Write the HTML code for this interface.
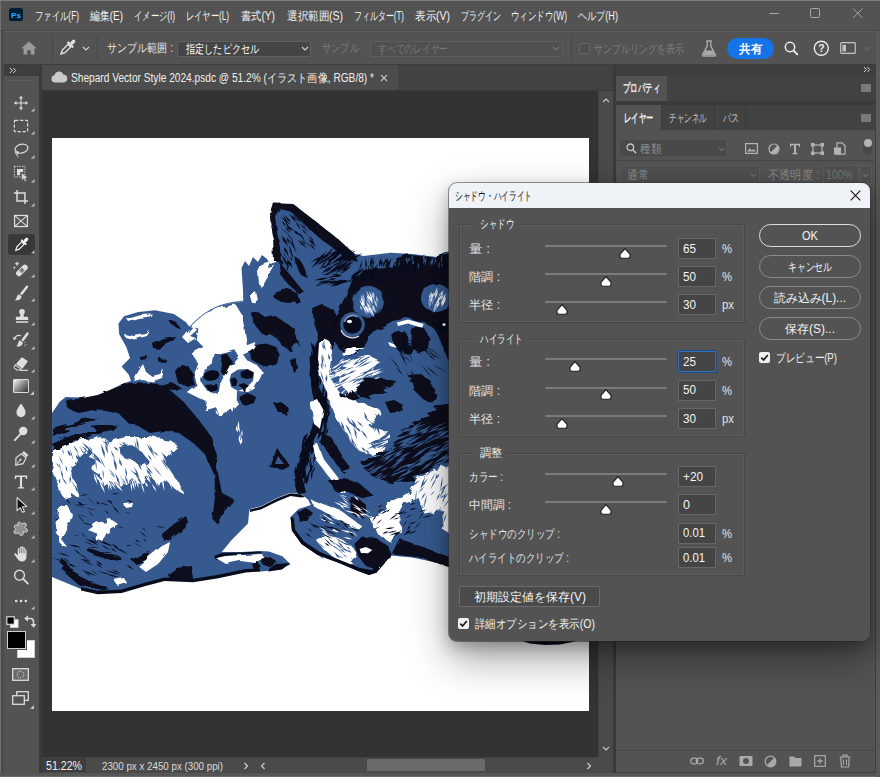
<!DOCTYPE html>
<html lang="ja">
<head>
<meta charset="utf-8">
<title>Photoshop</title>
<style>
*{box-sizing:border-box;margin:0;padding:0}
html,body{width:880px;height:777px;overflow:hidden;background:#535353}
body{position:relative;font-family:"Liberation Sans",sans-serif;font-size:12px;color:#e6e6e6;line-height:1}
.abs{position:absolute}
svg{display:block;overflow:visible}
.tx{position:absolute;overflow:visible}
.tx text{font-family:"Liberation Sans",sans-serif;white-space:pre}
</style>
</head>
<body>

<div class="abs" style="left:0px;top:0px;width:880px;height:777px;background:#535353;"></div>
<div class="abs" style="left:0px;top:30px;width:880px;height:1px;background:#474747;"></div>
<svg class="abs" style="left:9px;top:8px;" width="14" height="13" viewBox="0 0 14 13"><rect width="14" height="13" rx="2.6" fill="#001e36"/><text x="2.1" y="9.9" font-family="Liberation Sans" font-weight="bold" font-size="8" fill="#31a8ff" textLength="10" lengthAdjust="spacingAndGlyphs">Ps</text></svg>
<svg class="tx" style="left:35px;top:7.0px" width="46" height="18"><text x="0" y="13.3" font-size="12" font-weight="normal" fill="#f2f2f2" textLength="44" lengthAdjust="spacingAndGlyphs">ファイル(F)</text></svg>
<svg class="tx" style="left:90px;top:7.0px" width="35" height="18"><text x="0" y="13.3" font-size="12" font-weight="normal" fill="#f2f2f2" textLength="33" lengthAdjust="spacingAndGlyphs">編集(E)</text></svg>
<svg class="tx" style="left:134px;top:7.0px" width="43" height="18"><text x="0" y="13.3" font-size="12" font-weight="normal" fill="#f2f2f2" textLength="41" lengthAdjust="spacingAndGlyphs">イメージ(I)</text></svg>
<svg class="tx" style="left:186px;top:7.0px" width="45" height="18"><text x="0" y="13.3" font-size="12" font-weight="normal" fill="#f2f2f2" textLength="43" lengthAdjust="spacingAndGlyphs">レイヤー(L)</text></svg>
<svg class="tx" style="left:241px;top:7.0px" width="36" height="18"><text x="0" y="13.3" font-size="12" font-weight="normal" fill="#f2f2f2" textLength="34" lengthAdjust="spacingAndGlyphs">書式(Y)</text></svg>
<svg class="tx" style="left:287px;top:7.0px" width="58" height="18"><text x="0" y="13.3" font-size="12" font-weight="normal" fill="#f2f2f2" textLength="56" lengthAdjust="spacingAndGlyphs">選択範囲(S)</text></svg>
<svg class="tx" style="left:354px;top:7.0px" width="52" height="18"><text x="0" y="13.3" font-size="12" font-weight="normal" fill="#f2f2f2" textLength="50" lengthAdjust="spacingAndGlyphs">フィルター(T)</text></svg>
<svg class="tx" style="left:415px;top:7.0px" width="37" height="18"><text x="0" y="13.3" font-size="12" font-weight="normal" fill="#f2f2f2" textLength="35" lengthAdjust="spacingAndGlyphs">表示(V)</text></svg>
<svg class="tx" style="left:461px;top:7.0px" width="42" height="18"><text x="0" y="13.3" font-size="12" font-weight="normal" fill="#f2f2f2" textLength="40" lengthAdjust="spacingAndGlyphs">プラグイン</text></svg>
<svg class="tx" style="left:511px;top:7.0px" width="58" height="18"><text x="0" y="13.3" font-size="12" font-weight="normal" fill="#f2f2f2" textLength="56" lengthAdjust="spacingAndGlyphs">ウィンドウ(W)</text></svg>
<svg class="tx" style="left:578px;top:7.0px" width="42" height="18"><text x="0" y="13.3" font-size="12" font-weight="normal" fill="#f2f2f2" textLength="40" lengthAdjust="spacingAndGlyphs">ヘルプ(H)</text></svg>
<svg class="abs" style="left:769px;top:7px;" width="100" height="12" viewBox="0 0 100 12"><path d="M0.5 6.5H10" stroke="#a8a8a8" stroke-width="1" fill="none"/><rect x="41.5" y="1.5" width="9" height="9" rx="1" stroke="#a8a8a8" fill="none"/><path d="M84 1.5l9.5 9.5M93.5 1.5L84 11" stroke="#a8a8a8" stroke-width="1" fill="none"/></svg>
<div class="abs" style="left:4px;top:31px;width:872px;height:33px;background:#535353;border-top:1px solid #5e5e5e"></div>
<div class="abs" style="left:4px;top:64px;width:872px;height:1px;background:#3c3c3c;"></div>
<svg class="abs" style="left:21px;top:41px;" width="16" height="14" viewBox="0 0 16 14"><path d="M8 0.5L0.3 7.2H2.5V13.5H6.3V9.2H9.7V13.5H13.5V7.2H15.7Z" fill="#9a9a9a"/></svg>
<div class="abs" style="left:52px;top:36px;width:1px;height:24px;background:#474747;"></div>
<div class="abs" style="left:97px;top:36px;width:1px;height:24px;background:#474747;"></div>
<svg class="abs" style="left:59px;top:39px;" width="17" height="17" viewBox="0 0 17 17"><g transform="translate(8.5 8.5) scale(1.15) translate(-8.5 -8.5) rotate(45 8.5 8.5)"><rect x="7" y="-0.5" width="3" height="5" rx="1.4" fill="#e0e0e0"/><rect x="5" y="4" width="7" height="2" rx=".6" fill="#e0e0e0"/><path d="M6.9 6.2v7l1.6 3.3 1.6-3.3v-7z" fill="none" stroke="#e0e0e0" stroke-width="1.2"/></g></svg>
<svg class="abs" style="left:82px;top:46px;" width="8" height="5" viewBox="0 0 8 5"><path d="M1 1l3 3 3-3" stroke="#d0d0d0" stroke-width="1.2" fill="none"/></svg>
<svg class="tx" style="left:107px;top:39.0px" width="68" height="18"><text x="0" y="13.3" font-size="12" font-weight="normal" fill="#e6e6e6" textLength="66" lengthAdjust="spacingAndGlyphs">サンプル範囲 :</text></svg>
<div class="abs" style="left:177px;top:41px;width:134px;height:16px;background:#454545;border-radius:2px;border:1px solid #606060"></div>
<svg class="tx" style="left:186px;top:39.5px" width="75" height="18"><text x="0" y="13.3" font-size="12" font-weight="normal" fill="#ffffff" textLength="73" lengthAdjust="spacingAndGlyphs">指定したピクセル</text></svg>
<svg class="abs" style="left:301px;top:46px;" width="8" height="5" viewBox="0 0 8 5"><path d="M1 1l3 3 3-3" stroke="#d0d0d0" stroke-width="1.2" fill="none"/></svg>
<svg class="tx" style="left:322px;top:39.0px" width="44" height="18"><text x="0" y="13.3" font-size="12" font-weight="normal" fill="#7d7d7d" textLength="42" lengthAdjust="spacingAndGlyphs">サンプル :</text></svg>
<div class="abs" style="left:370px;top:41px;width:193px;height:16px;background:#505050;border-radius:2px;border:1px solid #5e5e5e"></div>
<svg class="tx" style="left:378px;top:39.5px" width="72" height="18"><text x="0" y="13.3" font-size="12" font-weight="normal" fill="#787878" textLength="70" lengthAdjust="spacingAndGlyphs">すべてのレイヤー</text></svg>
<svg class="abs" style="left:552px;top:46px;" width="8" height="5" viewBox="0 0 8 5"><path d="M1 1l3 3 3-3" stroke="#757575" stroke-width="1.2" fill="none"/></svg>
<div class="abs" style="left:571px;top:36px;width:1px;height:24px;background:#474747;"></div>
<div class="abs" style="left:579px;top:43px;width:11px;height:11px;background:#4e4e4e;border:1px solid #666;border-radius:2px"></div>
<svg class="tx" style="left:594px;top:39.5px" width="92" height="18"><text x="0" y="13.3" font-size="12" font-weight="normal" fill="#7d7d7d" textLength="90" lengthAdjust="spacingAndGlyphs">サンプルリングを表示</text></svg>
<svg class="abs" style="left:701px;top:40px;" width="16" height="17" viewBox="0 0 16 17"><path d="M5.2 1h5.6M6.2 1v5.2L1.6 14.6a1 1 0 0 0 .9 1.5h11a1 1 0 0 0 .9-1.5L9.8 6.2V1" fill="none" stroke="#a9a9a9" stroke-width="1.4"/><path d="M4.5 10.5h7l2.6 5H1.9z" fill="#a9a9a9"/></svg>
<div class="abs" style="left:727px;top:38px;width:47px;height:21px;background:#1473e6;border-radius:10.5px"></div>
<svg class="tx" style="left:739px;top:39.5px" width="25" height="18"><text x="0" y="13.3" font-size="12" font-weight="bold" fill="#ffffff" textLength="23" lengthAdjust="spacingAndGlyphs">共有</text></svg>
<svg class="abs" style="left:784px;top:41px;" width="15" height="15" viewBox="0 0 15 15"><circle cx="6" cy="6" r="4.7" fill="none" stroke="#ececec" stroke-width="1.5"/><path d="M9.5 9.5l4.3 4.3" stroke="#ececec" stroke-width="1.8"/></svg>
<svg class="abs" style="left:813px;top:40px;" width="17" height="17" viewBox="0 0 17 17"><circle cx="8.3" cy="8.3" r="7" fill="none" stroke="#ececec" stroke-width="1.4"/><text x="5.3" y="12.2" font-family="Liberation Sans" font-weight="bold" font-size="10.5" fill="#ececec">?</text></svg>
<svg class="abs" style="left:840px;top:42px;" width="16" height="12" viewBox="0 0 16 12"><rect x=".7" y=".7" width="14.6" height="10.6" rx="1" fill="none" stroke="#c4c4c4" stroke-width="1.2"/><rect x="2.5" y="2.8" width="3.5" height="6.6" fill="#c4c4c4"/></svg>
<svg class="abs" style="left:863px;top:46px;" width="8" height="5" viewBox="0 0 8 5"><path d="M1 1l3 3 3-3" stroke="#666" stroke-width="1.2" fill="none"/></svg>
<div class="abs" style="left:1px;top:31px;width:3px;height:746px;background:#4b4b4b;"></div>
<div class="abs" style="left:0px;top:0px;width:1px;height:777px;background:#6f6f6f;"></div>
<div class="abs" style="left:0px;top:0px;width:880px;height:1px;background:#7c7c7c;"></div>
<div class="abs" style="left:4px;top:65px;width:35px;height:707px;background:#535353;"></div>
<div class="abs" style="left:4px;top:65px;width:35px;height:11px;background:#3e3e3e;"></div>
<div class="abs" style="left:39px;top:65px;width:3px;height:712px;background:#3a3a3a;"></div>
<svg class="abs" style="left:9px;top:67px;" width="8" height="7" viewBox="0 0 8 7"><path d="M1 1l2.3 2.5L1 6M4.4 1l2.3 2.5L4.4 6" stroke="#d8d8d8" stroke-width="1" fill="none"/></svg>
<div class="abs" style="left:9px;top:80px;width:25px;height:1px;background:#5e5e5e;"></div>
<div class="abs" style="left:8px;top:234px;width:27px;height:21px;background:#383838;border-radius:3px"></div>
<svg class="abs" style="left:10.5px;top:92.5px;" width="20" height="20" viewBox="0 0 20 20"><g transform="translate(10 10) scale(.88) translate(-10 -10)"><g transform="translate(10 10) scale(.9) translate(-10 -10)"><path d="M10 3.5v13M3.500 10h13" stroke="#dedede" stroke-width="1.3"/><path d="M10 1l2.600 3.300h-5.200zM10 19l2.600-3.300h-5.200zM1 10l3.300-2.600v5.200zM19 10l-3.300-2.600v5.200z" fill="#dedede"/></g></g></svg>
<svg class="abs" style="left:30.5px;top:108.0px;" width="3.5" height="3.5" viewBox="0 0 3.5 3.5"><path d="M3.500 0V3.500H0Z" fill="#bdbdbd"/></svg>
<svg class="abs" style="left:11px;top:115.5px;" width="20" height="20" viewBox="0 0 20 20"><g transform="translate(10 10) scale(.88) translate(-10 -10)"><rect x="2.500" y="3.500" width="15" height="13" rx="1" fill="none" stroke="#dedede" stroke-width="1.400" stroke-dasharray="3.600 2"/></g></svg>
<svg class="abs" style="left:30.5px;top:131.0px;" width="3.5" height="3.5" viewBox="0 0 3.5 3.5"><path d="M3.500 0V3.500H0Z" fill="#bdbdbd"/></svg>
<svg class="abs" style="left:11px;top:139.5px;" width="20" height="20" viewBox="0 0 20 20"><g transform="translate(10 10) scale(.88) translate(-10 -10)"><ellipse cx="10.500" cy="8.500" rx="7.500" ry="5" transform="rotate(-14 10.500 8.500)" fill="none" stroke="#dedede" stroke-width="1.400"/><circle cx="5.300" cy="13" r="1.700" fill="none" stroke="#dedede" stroke-width="1.100"/><path d="M5.300 14.500c0 2 .800 3 1.800 3.800" fill="none" stroke="#dedede" stroke-width="1.100"/></g></svg>
<svg class="abs" style="left:30.5px;top:155.0px;" width="3.5" height="3.5" viewBox="0 0 3.5 3.5"><path d="M3.500 0V3.500H0Z" fill="#bdbdbd"/></svg>
<svg class="abs" style="left:11px;top:163px;" width="20" height="20" viewBox="0 0 20 20"><g transform="translate(10 10) scale(.88) translate(-10 -10)"><rect x="2.500" y="2.500" width="12" height="12" fill="none" stroke="#dedede" stroke-width="1.100" stroke-dasharray="1.600 1.300"/><path d="M5.500 5.500h7v3.500h-3.500v3.500h-3.500z" fill="#dedede"/><path d="M10.800 9.600v9l2.300-2.100 1.500 3.200 1.700-.8-1.500-3.100 3-.3z" fill="#dedede" stroke="#535353" stroke-width=".6"/></g></svg>
<svg class="abs" style="left:30.5px;top:178.5px;" width="3.5" height="3.5" viewBox="0 0 3.5 3.5"><path d="M3.500 0V3.500H0Z" fill="#bdbdbd"/></svg>
<svg class="abs" style="left:10.5px;top:187px;" width="20" height="20" viewBox="0 0 20 20"><g transform="translate(10 10) scale(.88) translate(-10 -10)"><path d="M5.500 2v12.500h12.500M2 5.500h12.500v12.500" fill="none" stroke="#dedede" stroke-width="1.700"/></g></svg>
<svg class="abs" style="left:30.5px;top:202.5px;" width="3.5" height="3.5" viewBox="0 0 3.5 3.5"><path d="M3.500 0V3.500H0Z" fill="#bdbdbd"/></svg>
<svg class="abs" style="left:11px;top:210.5px;" width="20" height="20" viewBox="0 0 20 20"><g transform="translate(10 10) scale(.88) translate(-10 -10)"><rect x="2.700" y="3.700" width="14.600" height="12.600" fill="none" stroke="#dedede" stroke-width="1.400"/><path d="M2.700 3.700l14.600 12.600M17.300 3.700L2.700 16.300" stroke="#dedede" stroke-width="1.200"/></g></svg>
<svg class="abs" style="left:11px;top:234.5px;" width="20" height="20" viewBox="0 0 20 20"><g transform="translate(10 10) scale(.88) translate(-10 -10)"><g transform="rotate(45 10 10)"><rect x="8.200" y="-1" width="3.600" height="6" rx="1.700" fill="#f4f4f4"/><rect x="6" y="4.500" width="8" height="2.200" rx=".6" fill="#f4f4f4"/><path d="M8.100 7v7.800l1.900 3.700 1.900-3.700V7z" fill="none" stroke="#f4f4f4" stroke-width="1.300"/></g></g></svg>
<svg class="abs" style="left:30.5px;top:250.0px;" width="3.5" height="3.5" viewBox="0 0 3.5 3.5"><path d="M3.500 0V3.500H0Z" fill="#bdbdbd"/></svg>
<svg class="abs" style="left:11px;top:258.5px;" width="20" height="20" viewBox="0 0 20 20"><g transform="translate(10 10) scale(.88) translate(-10 -10)"><g transform="rotate(-45 11 11.500)"><rect x="3" y="8.300" width="16" height="6.600" rx="3.300" fill="#dedede"/><rect x="8.800" y="9.400" width="4.400" height="4.400" fill="#535353"/><circle cx="10" cy="10.700" r=".6" fill="#dedede"/><circle cx="12" cy="10.700" r=".6" fill="#dedede"/><circle cx="10" cy="12.600" r=".6" fill="#dedede"/><circle cx="12" cy="12.600" r=".6" fill="#dedede"/></g><path d="M5.500 1l.9 2.100 2.100.9-2.100.9-.9 2.100-.9-2.100-2.100-.9 2.100-.9z" fill="#dedede"/><path d="M2.500 7l.5 1.100 1.100.5-1.100.5-.5 1.100-.5-1.100L.9 8.600 2 8.100z" fill="#dedede"/></g></svg>
<svg class="abs" style="left:30.5px;top:274.0px;" width="3.5" height="3.5" viewBox="0 0 3.5 3.5"><path d="M3.500 0V3.500H0Z" fill="#bdbdbd"/></svg>
<svg class="abs" style="left:11px;top:282.5px;" width="20" height="20" viewBox="0 0 20 20"><g transform="translate(10 10) scale(.88) translate(-10 -10)"><path d="M17.800 1.600c.9.600.4 1.800-.3 2.800l-6.400 8.200-2.300-1.700 6.400-8.200c.8-1 1.800-1.700 2.600-1.100z" fill="#dedede"/><path d="M8 11.700l2.300 1.800c.6 1.600-.4 3.300-2.200 4.200-1.800.8-3.900.8-5.300.2 1.300-.5 1.900-1.400 2.200-2.700.4-1.800 1.300-3.300 3-3.500z" fill="#dedede"/></g></svg>
<svg class="abs" style="left:30.5px;top:298.0px;" width="3.5" height="3.5" viewBox="0 0 3.5 3.5"><path d="M3.500 0V3.500H0Z" fill="#bdbdbd"/></svg>
<svg class="abs" style="left:11.5px;top:306px;" width="20" height="20" viewBox="0 0 20 20"><g transform="translate(10 10) scale(.88) translate(-10 -10)"><path d="M10 2a3.200 3.200 0 0 1 3.200 3.200c0 1.500-1 2.300-1.300 3.400-.2.800-.1 1.700.5 2.200h3.100c1 0 1.500.6 1.500 1.500v2.200H3v-2.200c0-.9.500-1.500 1.500-1.500h3.100c.6-.5.700-1.400.5-2.200-.3-1.100-1.300-1.900-1.300-3.400A3.200 3.200 0 0 1 10 2z" fill="#dedede"/><rect x="3" y="16" width="14" height="1.700" fill="#dedede"/></g></svg>
<svg class="abs" style="left:30.5px;top:321.5px;" width="3.5" height="3.5" viewBox="0 0 3.5 3.5"><path d="M3.500 0V3.500H0Z" fill="#bdbdbd"/></svg>
<svg class="abs" style="left:11px;top:330px;" width="20" height="20" viewBox="0 0 20 20"><g transform="translate(10 10) scale(.88) translate(-10 -10)"><path d="M18.300 1.400c.9.600.4 1.800-.3 2.800l-5.400 7.400-2.300-1.700 5.400-7.400c.8-1 1.800-1.700 2.600-1.100z" fill="#dedede"/><path d="M9.500 10.700l2.300 1.800c.6 1.600-.4 3.300-2.200 4.200-1.800.8-3.900.8-5.300.2 1.300-.5 1.900-1.400 2.200-2.700.4-1.800 1.300-3.300 3-3.500z" fill="#dedede"/><path d="M2.300 8.700c1.300-3 4.500-4.500 7.700-3.600" fill="none" stroke="#dedede" stroke-width="1.200"/><path d="M.6 6.700l1.300 3.600 3.200-1.900z" fill="#dedede"/><path d="M14.500 12.500v.1M16 15v.1M14 16.500v.1" stroke="#dedede" stroke-width="1.100" stroke-linecap="round"/></g></svg>
<svg class="abs" style="left:30.5px;top:345.5px;" width="3.5" height="3.5" viewBox="0 0 3.5 3.5"><path d="M3.500 0V3.500H0Z" fill="#bdbdbd"/></svg>
<svg class="abs" style="left:11px;top:353.5px;" width="20" height="20" viewBox="0 0 20 20"><g transform="translate(10 10) scale(.88) translate(-10 -10)"><path d="M12.200 2.800l5 3.600c.5.400.5.900.2 1.400l-5.800 7.600-7.300-5.300 5.800-7c.6-.7 1.400-.8 2.100-.3z" fill="#dedede"/><path d="M3.500 11l6.800 5-0.600.8H5.400l-2.800-2.200c-.6-.5-.7-1.100-.2-1.800z" fill="none" stroke="#dedede" stroke-width="1.200"/><path d="M9 17.200h9" stroke="#dedede" stroke-width="1.300"/></g></svg>
<svg class="abs" style="left:30.5px;top:369.0px;" width="3.5" height="3.5" viewBox="0 0 3.5 3.5"><path d="M3.500 0V3.500H0Z" fill="#bdbdbd"/></svg>
<div class="abs" style="left:13px;top:379px;width:16px;height:14px;border:1.500px solid #dcdcdc;border-radius:1px;background:linear-gradient(135deg,#e8e8e8 5%,#8a8a8a 50%,#3c3c3c 95%)"></div>
<svg class="abs" style="left:30px;top:391px;" width="4" height="4" viewBox="0 0 4 4"><path d="M4 0V4H0Z" fill="#c8c8c8"/></svg>
<svg class="abs" style="left:11px;top:400.5px;" width="20" height="20" viewBox="0 0 20 20"><g transform="translate(10 10) scale(.88) translate(-10 -10)"><path d="M10 1.500c2.400 3.600 5.200 6.700 5.200 10.300a5.200 5.200 0 0 1-10.400 0C4.800 8.200 7.600 5.100 10 1.500z" fill="#dedede"/></g></svg>
<svg class="abs" style="left:30.5px;top:416.0px;" width="3.5" height="3.5" viewBox="0 0 3.5 3.5"><path d="M3.500 0V3.500H0Z" fill="#bdbdbd"/></svg>
<svg class="abs" style="left:11px;top:424px;" width="20" height="20" viewBox="0 0 20 20"><g transform="translate(10 10) scale(.88) translate(-10 -10)"><circle cx="12.500" cy="6.500" r="4.800" fill="#dedede"/><path d="M9 10.500L3 17" stroke="#dedede" stroke-width="2.200" stroke-linecap="round"/></g></svg>
<svg class="abs" style="left:30.5px;top:439.5px;" width="3.5" height="3.5" viewBox="0 0 3.5 3.5"><path d="M3.500 0V3.500H0Z" fill="#bdbdbd"/></svg>
<svg class="abs" style="left:11px;top:448.5px;" width="20" height="20" viewBox="0 0 20 20"><g transform="translate(10 10) scale(.88) translate(-10 -10)"><g transform="rotate(40 10 10)"><path d="M6.500 1h7v3h-7z" fill="#dedede"/><path d="M6.500 5.200h7l1.800 7.300L10 19.300 4.700 12.500z" fill="none" stroke="#dedede" stroke-width="1.300"/><path d="M10 18.500v-7" stroke="#dedede" stroke-width="1.100"/><circle cx="10" cy="10.800" r="1.200" fill="#dedede"/></g></g></svg>
<svg class="abs" style="left:30.5px;top:464.0px;" width="3.5" height="3.5" viewBox="0 0 3.5 3.5"><path d="M3.500 0V3.500H0Z" fill="#bdbdbd"/></svg>
<svg class="abs" style="left:11px;top:471.5px;" width="20" height="20" viewBox="0 0 20 20"><g transform="translate(10 10) scale(.88) translate(-10 -10)"><path d="M3 2.500h14v4.200h-1.300l-.5-2.300H11.200v11.300l2.300.5v1.300H6.500v-1.300l2.300-.5V4.400H4.800l-.5 2.300H3z" fill="#dedede"/></g></svg>
<svg class="abs" style="left:30.5px;top:487.0px;" width="3.5" height="3.5" viewBox="0 0 3.5 3.5"><path d="M3.500 0V3.500H0Z" fill="#bdbdbd"/></svg>
<svg class="abs" style="left:11px;top:495px;" width="20" height="20" viewBox="0 0 20 20"><g transform="translate(10 10) scale(.88) translate(-10 -10)"><path d="M5.500 1.500v15l3.700-3.400 2.500 5.200 2.200-1-2.400-5.200 5-.4z" fill="#101010" stroke="#dedede" stroke-width="1.200" stroke-linejoin="round"/></g></svg>
<svg class="abs" style="left:30.5px;top:510.5px;" width="3.5" height="3.5" viewBox="0 0 3.5 3.5"><path d="M3.500 0V3.500H0Z" fill="#bdbdbd"/></svg>
<svg class="abs" style="left:11px;top:519px;" width="20" height="20" viewBox="0 0 20 20"><g transform="translate(10 10) scale(.88) translate(-10 -10)"><path d="M7 2.500c1.600-.9 2.800.6 3.400 1.900 1.600-1 4-1.700 5.300-.3 1.300 1.500-.3 3.200-1.600 4.100 1.600.9 3.900 2.200 3.200 4.100-.8 1.900-3.300 1.200-4.800.6.200 1.800.1 4.200-1.900 4.500-2 .3-2.800-1.800-3.300-3.300-1.400 1-3.700 2-4.900.4-1.100-1.600.7-3.300 2.100-4.200C3.200 9.300 1.700 7.700 2.700 6.200c1-1.400 2.900-.7 4.100 0C6.500 5 5.800 3.200 7 2.500z" fill="#8f8f8f" stroke="#dedede" stroke-width="1.100"/></g></svg>
<svg class="abs" style="left:30.5px;top:534.5px;" width="3.5" height="3.5" viewBox="0 0 3.5 3.5"><path d="M3.500 0V3.500H0Z" fill="#bdbdbd"/></svg>
<svg class="abs" style="left:11px;top:543.5px;" width="20" height="20" viewBox="0 0 20 20"><g transform="translate(10 10) scale(.88) translate(-10 -10)"><path d="M8.300 9V3.200c0-1.500 2-1.500 2 0V2.300c0-1.500 2.100-1.500 2.100 0v1.200c0-1.400 2-1.400 2 0v2c0-1.300 1.900-1.300 1.900 0v7.300c0 3.500-2 5.700-5.300 5.700-2.700 0-3.800-1.200-5-3L2.600 10.800c-.8-1.300.8-2.300 1.800-1.200l1.900 2.200V4.600c0-1.500 2-1.500 2 0z" fill="#dedede"/><path d="M8.300 9V4M10.300 9V3M12.400 9V3.500M14.400 9.300V5.500" stroke="#535353" stroke-width=".7"/></g></svg>
<svg class="abs" style="left:30.5px;top:559.0px;" width="3.5" height="3.5" viewBox="0 0 3.5 3.5"><path d="M3.500 0V3.500H0Z" fill="#bdbdbd"/></svg>
<svg class="abs" style="left:10.5px;top:567px;" width="20" height="20" viewBox="0 0 20 20"><g transform="translate(10 10) scale(.88) translate(-10 -10)"><circle cx="8.300" cy="8" r="5.600" fill="none" stroke="#dedede" stroke-width="1.600"/><path d="M12.500 12.200l5.300 5.300" stroke="#dedede" stroke-width="2.100" stroke-linecap="round"/></g></svg>
<svg class="abs" style="left:11px;top:590.5px;" width="20" height="20" viewBox="0 0 20 20"><g transform="translate(10 10) scale(.88) translate(-10 -10)"><circle cx="4.500" cy="10" r="1.500" fill="#dedede"/><circle cx="10" cy="10" r="1.500" fill="#dedede"/><circle cx="15.500" cy="10" r="1.500" fill="#dedede"/></g></svg>
<svg class="abs" style="left:30.5px;top:606.0px;" width="3.5" height="3.5" viewBox="0 0 3.5 3.5"><path d="M3.500 0V3.500H0Z" fill="#bdbdbd"/></svg>
<svg class="abs" style="left:6px;top:616px;" width="13" height="12" viewBox="0 0 13 12"><rect x="4.500" y="3.800" width="7.500" height="7.500" fill="#fff" stroke="#dcdcdc" stroke-width="1"/><rect x=".8" y=".8" width="7.500" height="7.500" fill="#000" stroke="#dcdcdc" stroke-width="1.200"/></svg>
<svg class="abs" style="left:24px;top:615px;" width="12" height="13" viewBox="0 0 12 13"><path d="M3.500 3.500h2.800a3.200 3.200 0 0 1 3.200 3.200v2.800" fill="none" stroke="#dcdcdc" stroke-width="1.500"/><path d="M.2 3.500L4 .6v5.800zM9.500 12.800L6.600 9h5.800z" fill="#dcdcdc"/></svg>
<div class="abs" style="left:17px;top:640px;width:18px;height:18px;background:#ffffff;border:1px solid #d0d0d0"></div>
<div class="abs" style="left:7px;top:631px;width:19px;height:18px;background:#000000;border:1.500px solid #cfcfcf;box-shadow:0 0 0 1px #535353"></div>
<svg class="abs" style="left:12px;top:668px;" width="17" height="13" viewBox="0 0 17 13"><rect x=".7" y=".7" width="15.600" height="11.600" fill="#6a6a6a" stroke="#dcdcdc" stroke-width="1.300"/><circle cx="8.500" cy="6.500" r="3.300" fill="none" stroke="#dcdcdc" stroke-width="1" stroke-dasharray="1.200 1"/></svg>
<svg class="abs" style="left:12px;top:691px;" width="17" height="14" viewBox="0 0 17 14"><rect x="4.700" y=".7" width="11.600" height="8.600" fill="#535353" stroke="#dcdcdc" stroke-width="1.300"/><rect x=".7" y="4.700" width="11.600" height="8.600" fill="#535353" stroke="#dcdcdc" stroke-width="1.300"/></svg>
<svg class="abs" style="left:30px;top:705px;" width="4" height="4" viewBox="0 0 4 4"><path d="M4 0V4H0Z" fill="#c8c8c8"/></svg>
<div class="abs" style="left:42px;top:65px;width:571px;height:708px;background:#333333;"></div>
<div class="abs" style="left:42px;top:65px;width:571px;height:26px;background:#424242;"></div>
<div class="abs" style="left:42px;top:65px;width:356px;height:26px;background:#4c4c4c;"></div>
<div class="abs" style="left:42px;top:90px;width:571px;height:1px;background:#3a3a3a;"></div>
<svg class="abs" style="left:51px;top:71px;" width="17" height="12" viewBox="0 0 17 12"><path d="M4 11.500a3.600 3.600 0 0 1-.5-7.150A4.600 4.600 0 0 1 12.300 3.400a4.100 4.100 0 0 1 .8 8.100z" fill="#c9c9c9"/></svg>
<svg class="tx" style="left:71px;top:68.5px" width="305" height="18"><text x="0" y="13.3" font-size="12" font-weight="normal" fill="#f0f0f0" textLength="303" lengthAdjust="spacingAndGlyphs">Shepard Vector Style 2024.psdc @ 51.2% (イラスト画像, RGB/8) *</text></svg>
<svg class="abs" style="left:380px;top:74px;" width="8" height="8" viewBox="0 0 8 8"><path d="M1 1l6 6M7 1L1 7" stroke="#c0c0c0" stroke-width="1.100"/></svg>
<div class="abs" style="left:52px;top:138px;width:537px;height:573px;background:#ffffff;"></div>
<svg class="abs" style="left:52px;top:138px;" width="537" height="573" viewBox="52 138 537 573"><defs><filter id="r1" x="-5%" y="-5%" width="110%" height="110%"><feTurbulence type="fractalNoise" baseFrequency="0.09" numOctaves="2" seed="4"/><feDisplacementMap in="SourceGraphic" scale="5"/></filter><filter id="r2" x="-10%" y="-10%" width="120%" height="120%"><feTurbulence type="fractalNoise" baseFrequency="0.14" numOctaves="2" seed="9"/><feDisplacementMap in="SourceGraphic" scale="8"/></filter><filter id="r3" x="-10%" y="-10%" width="120%" height="120%"><feTurbulence type="fractalNoise" baseFrequency="0.05 0.2" numOctaves="2" seed="2"/><feDisplacementMap in="SourceGraphic" scale="10"/></filter><clipPath id="cv"><rect x="52" y="138" width="537" height="573"/></clipPath></defs><g clip-path="url(#cv)"><path d="M52 413 L59.5 402 L65.5 397 L81 397.4 L88 400 L105 392.6 L121.6 384.3 L131 380.7 L128.8 374.7 L121.6 366.4 L130 358 L126.4 347.3 L119.2 334.2 L118.5 323.4 L124 316.3 L138.3 312 L155 310.3 L174 313.9 L186 322.2 L189.6 327 L202.7 315 L217 306.7 L233.8 302.4 L243.3 302 L243 290 L241.5 268 L245 261 L249 266 L253 257 L258 262 L262 255 L267 259 L270 264 L276 262 L277 257.6 L273 236 L270 217 L274 203.5 L293 204 L315 221 L339 240 L354 253.5 L363.5 256 L390.5 252.7 L412 254 L436.5 257 L444.6 252 L449 251.6 L470 250 L470 600 L460 568 L448.6 565.7 L439 563 L412 557.6 L390.5 555.4 L379.7 563 L377 572.4 L369 575 L358 571 L339 563 L317.6 554.9 L301.4 544 L291.9 530.5 L290.5 517 L298.6 509 L310.8 504.9 L308 499.5 L301.4 494 L290.5 492.7 L277 498 L260.8 506.2 L250 509 L249.3 510.4 L248 523.5 L231.4 540.2 L221.8 552 L241 552 L260 551 L269 551.6 L282.4 556.2 L290.5 564.3 L279.7 569.7 L260.8 571.6 L250 570.5 L245.7 571 L217 577 L193 580.8 L164.6 579.6 L145.5 584.4 L121.6 591.5 L97.7 592.7 L81 589 L52 577Z" fill="#365a8f"/><path d="M190 326.5 L201.8 316 L218.5 307 L233.6 303.6 L236 305 L242 315 L244.4 328.5 L247 345.2 L255.3 341.9 L253.6 348.6 L247 352.8 L243 354.5 L247 360.3 L257 365.3 L262.8 372 L260.3 377.9 L254 389 L248 392 L238 391 L237.7 403.8 L230.2 410.5 L220.2 417.2 L216 407.2 L205 410.5 L206.8 402 L186.7 392 L196.7 384.6 L194.2 373.7 L198.4 363.6 L191.7 353.6 L203.4 346.9 L196.7 340.2 L198.4 328.5Z" fill="#ffffff" filter="url(#r1)"/><path d="M189.500 327C196 320 206 311 218.500 306.300S240 302 248 300.500" fill="none" stroke="#365a8f" stroke-width="1"/><path d="M183 338 L193 326 L197 330 L190 336 L196 338 L188 343Z" fill="#ffffff" filter="url(#r1)"/><path d="M213.5 352.8 L223.5 353.6 L235.2 350.3 L239.4 357 L231.9 365.3 L225.2 373.7 L220.2 383.7 L218.5 393.8 L208.5 392 L200 380.4 L201.8 370.3 L211.8 363.6Z" fill="#365a8f" filter="url(#r1)"/><path d="M221 355 L227 354 L232 361 L230 368 L225 377 L221 372 L222 364Z" fill="#070b1c" filter="url(#r1)"/><ellipse cx="211.5" cy="375.5" rx="8" ry="5.2" fill="#070b1c" transform="rotate(-12 211.5 375.5)"/><path d="M205 385 L217 384 L218 390 L210 392Z" fill="#070b1c" filter="url(#r1)"/><path d="M231 374 L238 369.5 L248 369 L254 373 L253 381 L246 388 L238 391 L231 387 L229.5 380Z" fill="#365a8f"/><path d="M240.5 372 L247 369.5 L253.5 372 L252.5 378 L246 379 L241 377Z" fill="#070b1c"/><path d="M230.5 379 L235 377.5 L237.5 381 L236 386 L232 386Z" fill="#070b1c"/><path d="M238 385 L244 383 L249 386 L246 388 L245 393 L242 388Z" fill="#070b1c"/><path d="M240.5 398 L248 394 L256 397 L254 403 L246 405.5 L241 403Z" fill="#070b1c" filter="url(#r1)"/><path d="M250 351 L256 345 L266 343.5 L276 347 L279 355 L277 364 L268 367 L258 364 L251 359Z" fill="#070b1c" filter="url(#r1)"/><path d="M251 314 L258 312 L266 318 L275 316 L284 322 L296 330 L299 344 L290 350 L282 346 L277 338 L270 334 L262 334 L256 326Z" fill="#070b1c" filter="url(#r2)"/><path d="M276 292 L288 289 L298 293 L300 301 L290 304 L280 301 L274 298Z" fill="#070b1c" filter="url(#r2)"/><path d="M274 404 L281 402 L288.8 408 L286 414.7 L279 412Z" fill="#070b1c" filter="url(#r1)"/><path d="M290 360 L296 358 L298 368 L293 372Z" fill="#070b1c" filter="url(#r1)"/><path d="M258 272 L263 262 L270 260 L268 268 L275 266 L266 280 L262 288 L259 284Z" fill="#ffffff" filter="url(#r1)"/><path d="M250 296 L256 292 L258 300 L252 303Z" fill="#ffffff" filter="url(#r1)"/><path d="M126 318 L140 314 L152 313.5 L150 316.5 L138 318 L128 321Z" fill="#ffffff" filter="url(#r1)"/><path d="M124 334 L134 336 L146 334 L150 331 L147 336 L134 339.5 L125 337Z" fill="#ffffff" filter="url(#r1)"/><path d="M152 343 L163 338 L175 336 L174 340 L166 343 L160 349 L153 348Z" fill="#070b1c" filter="url(#r1)"/><path d="M140 357 L148 356 L147 360 L141 361Z" fill="#070b1c" filter="url(#r1)"/><path d="M158 357 L166 359 L165 362 L158 361Z" fill="#070b1c" filter="url(#r1)"/><path d="M168 319 L176 322 L181 329 L177 328 L170 323Z" fill="#070b1c" filter="url(#r1)"/><path d="M138 372 L143 364 L146 372 L152 376 L160 374 L164 369 L162 378 L152 381.5 L142 379 L134 381Z" fill="#ffffff" filter="url(#r1)"/><path d="M175 371 L181 364 L188 366 L193 374 L194 384 L186 386 L178 383Z" fill="#070b1c" filter="url(#r1)"/><path d="M160 385 L170 382 L182 388 L176 391 L166 390Z" fill="#070b1c" filter="url(#r1)"/><path d="M66.7 399.8 L80 398.5 L97.7 395 L115 388 L128.8 383 L150 381.9 L164.6 385.5 L183.7 402 L198 418.9 L212.3 438 L217 460 L217 468.6 L221.8 492.5 L233.8 499.7 L224 511.6 L217 523.5 L212.3 518.8 L214.7 499.7 L214.7 475.8 L205 454.3 L193 442.7 L179 433 L164.6 430.8 L150 433 L138.3 426 L128.8 423.6 L119.2 414 L97.7 409.3 L78.6 412.9 L66.7 407Z" fill="#070b1c" filter="url(#r1)"/><path d="M52 444 L70 436 L92 428 L119 424 L112 430 L92 434 L74 442 L58 452 L52 456Z" fill="#070b1c" filter="url(#r3)"/><path d="M52 428 L66 424 L84 419 L100 416 L84 424 L66 430 L52 436Z" fill="#070b1c" filter="url(#r3)"/><path d="M52 452 L62 448 L78 440 L96 437 L108 440 L100 446 L86 450 L78 460 L72 472 L76 486 L80 498 L72 494 L66 500 L60 492 L56 478 L52 470Z" fill="#ffffff" filter="url(#r2)"/><path d="M92 446 L110 441 L126 437 L150 437 L170 440 L178 446 L172 452 L164 462 L170 470 L178 482 L184 494 L176 490 L166 480 L158 484 L150 476 L140 484 L132 478 L122 488 L114 480 L104 486 L100 474 L92 470 L96 460 L88 456Z" fill="#ffffff" filter="url(#r2)"/><path d="M118 446 L130 444 L140 450 L150 462 L142 466 L132 460 L122 456Z" fill="#365a8f" filter="url(#r2)"/><path d="M101.1 444.9L101.7 448.3L103.7 451.1L103.0 447.8ZM105.0 441.6L106.0 444.6L108.1 447.1L107.1 444.0ZM109.4 472.4L111.9 475.7L115.5 477.8L113.0 474.5ZM160.3 458.8L164.4 465.3L169.2 471.4L165.1 464.8ZM153.2 451.2L155.4 454.0L158.5 456.0L156.2 453.1ZM149.0 443.8L151.0 449.5L154.3 454.7L152.2 449.0ZM121.6 442.1L124.3 445.1L127.9 447.0L125.3 443.9ZM110.5 449.9L112.2 454.8L115.0 459.2L113.3 454.3ZM145.5 465.7L148.9 470.4L153.3 474.2L150.0 469.5ZM152.5 465.3L157.1 471.5L162.5 477.0L157.9 470.9ZM107.9 468.7L111.5 472.6L115.7 475.9L112.1 472.0ZM133.6 466.1L136.3 472.8L140.0 479.0L137.4 472.3ZM137.3 461.1L138.7 466.2L141.8 470.4L140.3 465.4ZM163.2 457.9L163.7 461.3L165.7 464.0L165.2 460.7ZM148.6 448.3L151.8 453.6L155.8 458.4L152.5 453.1ZM113.7 446.6L115.6 449.4L118.7 450.9L116.7 448.1ZM78.8 446.1L82.6 452.2L87.1 457.8L83.3 451.6ZM113.6 457.2L114.0 464.1L116.2 470.8L115.8 463.8ZM93.5 452.8L97.1 459.2L102.2 464.4L98.6 458.0ZM82.3 446.1L84.6 449.5L87.9 452.0L85.6 448.6ZM124.8 449.6L128.6 453.0L133.0 455.4L129.3 452.0ZM124.7 475.0L125.9 480.4L128.5 485.3L127.4 479.9ZM136.4 437.5L136.7 444.3L138.8 450.8L138.5 444.0ZM147.8 454.8L149.2 458.1L151.8 460.6L150.4 457.2ZM88.9 445.9L90.5 448.8L92.9 451.1L91.2 448.2ZM105.2 437.2L105.9 443.1L107.5 448.9L106.9 442.9ZM93.1 453.0L94.5 456.4L97.4 458.8L95.9 455.4ZM167.6 457.7L168.9 460.9L171.1 463.6L169.7 460.4ZM103.4 448.9L103.8 452.7L105.1 456.3L104.7 452.5ZM161.0 459.4L164.8 463.5L169.2 466.9L165.4 462.8ZM121.5 474.9L122.3 481.3L124.1 487.3L123.4 481.0ZM105.1 443.4L105.8 448.9L108.2 454.0L107.5 448.4ZM101.0 443.4L102.1 451.1L104.9 458.4L103.8 450.7ZM149.3 470.8L149.9 475.0L151.9 478.6L151.3 474.5ZM102.1 440.6L105.2 443.6L109.1 445.7L105.9 442.7ZM135.2 473.9L138.4 480.8L143.3 486.6L140.1 479.7ZM162.7 453.6L165.1 457.0L168.3 459.5L165.9 456.2ZM89.2 460.0L89.8 467.1L91.7 473.9L91.1 466.8ZM130.5 470.1L134.7 474.7L140.1 477.9L135.9 473.3ZM146.2 468.7L147.5 472.5L150.2 475.3L149.0 471.6ZM102.7 469.2L102.6 474.1L103.8 478.9L103.9 474.0ZM81.6 442.1L86.4 447.7L92.4 452.0L87.6 446.4ZM84.0 468.9L84.0 475.1L85.3 481.2L85.2 475.0ZM118.6 442.8L124.4 447.9L131.1 451.7L125.3 446.6ZM118.7 473.3L121.9 479.8L126.6 485.3L123.4 478.9ZM88.4 448.9L90.5 452.6L93.8 455.2L91.7 451.6ZM90.4 453.9L95.5 459.2L101.5 463.6L96.3 458.3ZM115.0 460.4L114.9 465.5L116.7 470.3L116.7 465.2ZM118.7 460.6L119.6 463.6L121.7 466.0L120.7 463.0ZM146.5 443.4L149.3 449.3L153.3 454.4L150.5 448.5ZM99.5 456.7L102.2 463.0L105.7 468.7L103.0 462.5ZM121.6 446.9L125.5 452.4L130.4 457.0L126.6 451.5ZM125.3 467.3L125.4 472.5L127.0 477.5L126.9 472.3ZM118.8 457.6L119.9 462.7L122.4 467.3L121.2 462.2ZM115.3 472.9L116.9 480.0L120.3 486.4L118.7 479.3ZM95.0 457.4L95.5 464.4L96.9 471.3L96.5 464.3ZM78.9 457.1L81.9 460.0L85.4 462.3L82.4 459.3ZM136.3 469.7L136.1 473.5L137.6 477.0L137.8 473.2ZM134.6 440.2L135.5 447.8L137.5 455.2L136.6 447.6ZM161.3 451.3L164.5 458.4L169.2 464.6L166.0 457.5Z" fill="#365a8f"/><path d="M58.9 462.8L59.4 466.7L60.8 470.3L60.3 466.5ZM61.9 477.2L64.0 481.5L67.2 485.0L65.1 480.8ZM70.3 465.2L73.0 471.0L77.2 476.0L74.4 470.2ZM76.3 454.9L77.6 459.0L80.5 462.2L79.1 458.1ZM76.6 452.5L79.0 458.3L82.6 463.3L80.2 457.6ZM73.2 445.1L75.5 449.8L78.9 453.9L76.5 449.1ZM70.9 480.0L73.7 485.3L77.1 490.1L74.4 484.9ZM79.2 463.3L80.1 468.0L82.6 472.1L81.7 467.4ZM62.2 448.1L62.6 451.6L63.9 454.8L63.5 451.4ZM58.9 455.5L60.6 460.8L63.2 465.7L61.6 460.4ZM69.1 451.5L69.5 454.1L70.9 456.3L70.5 453.7ZM69.8 448.5L71.1 454.6L73.3 460.5L72.0 454.4ZM78.0 461.0L79.0 466.8L81.1 472.2L80.1 466.5ZM70.5 475.5L69.4 479.3L69.9 483.2L71.0 479.4ZM74.9 473.1L75.8 476.9L77.5 480.5L76.6 476.7ZM75.9 455.3L76.5 458.2L78.6 460.3L78.0 457.4ZM79.7 475.4L80.6 478.7L82.5 481.7L81.6 478.3ZM67.7 449.5L67.9 453.1L69.8 456.3L69.6 452.6ZM81.5 466.6L83.7 472.6L86.9 478.1L84.7 472.1ZM65.6 465.5L65.8 468.9L67.3 471.9L67.1 468.6ZM56.3 462.8L57.2 465.3L59.1 467.1L58.2 464.7ZM60.7 468.9L61.3 474.5L63.3 479.6L62.7 474.1ZM75.2 485.4L75.6 489.3L77.7 492.5L77.3 488.7ZM59.1 478.6L58.7 481.3L59.9 483.8L60.3 481.1Z" fill="#365a8f"/><path d="M168.3 477.2L169.7 483.9L172.2 490.4L170.8 483.6ZM135.6 475.4L136.2 482.3L138.7 488.7L138.1 481.8ZM140.6 481.5L142.0 487.7L144.6 493.5L143.2 487.3ZM121.2 470.9L121.6 476.7L123.7 482.0L123.3 476.3ZM145.1 481.8L145.5 485.0L147.7 487.3L147.3 484.1ZM154.9 476.4L156.9 482.3L159.8 487.7L157.8 481.8ZM153.5 475.3L155.6 479.1L159.1 481.8L157.0 477.9ZM107.7 480.0L107.8 485.5L109.2 490.7L109.2 485.3ZM131.5 478.8L132.3 484.8L134.7 490.3L134.0 484.3ZM109.8 480.6L112.4 485.7L115.9 490.3L113.3 485.1ZM93.4 472.8L94.6 479.1L97.5 484.7L96.3 478.5ZM113.9 477.5L115.7 482.5L118.5 486.9L116.7 482.0ZM169.4 470.4L169.9 477.9L171.4 485.2L170.9 477.7ZM130.6 481.4L130.7 486.6L132.0 491.6L132.0 486.4ZM105.6 478.8L108.1 483.8L112.4 487.5L109.8 482.5ZM98.9 479.9L101.1 486.9L105.0 493.1L102.8 486.1ZM109.5 484.8L110.4 487.8L112.2 490.4L111.3 487.4ZM132.3 478.2L133.7 481.7L136.2 484.4L134.8 480.9ZM113.9 481.9L117.7 487.5L122.9 491.6L119.2 486.1ZM151.6 483.6L153.6 488.0L156.7 491.7L154.8 487.2ZM120.7 478.3L122.0 481.3L124.2 483.7L122.9 480.7ZM164.4 474.9L164.5 479.1L165.8 483.1L165.8 478.9ZM132.2 471.1L135.1 478.2L139.7 484.3L136.9 477.1ZM161.8 476.4L162.3 484.0L164.4 491.2L163.9 483.7ZM154.2 475.5L155.3 481.5L157.6 487.2L156.5 481.1ZM99.2 477.8L100.6 482.1L103.7 485.4L102.3 481.1ZM147.1 474.7L148.5 479.4L150.9 483.7L149.6 479.0ZM103.6 472.6L103.9 478.0L105.5 483.2L105.2 477.8ZM128.5 474.2L129.9 477.4L132.5 479.7L131.1 476.5ZM95.0 473.6L97.3 478.9L101.4 483.1L99.1 477.8ZM154.9 475.9L156.8 481.1L160.1 485.6L158.1 480.4ZM116.3 469.5L120.0 476.2L124.6 482.3L120.9 475.6ZM134.5 479.9L134.7 483.9L136.1 487.8L135.9 483.7ZM108.9 473.8L111.4 481.1L115.8 487.4L113.3 480.1ZM169.5 478.8L169.9 481.9L171.7 484.4L171.3 481.4ZM109.0 472.2L111.6 477.1L115.7 480.9L113.1 476.0ZM172.5 478.8L174.0 485.4L177.0 491.4L175.5 484.8ZM138.6 471.6L138.6 475.8L140.7 479.5L140.7 475.3ZM145.5 476.0L147.4 479.8L150.7 482.6L148.8 478.7ZM149.3 472.4L152.2 477.1L156.5 480.8L153.5 476.0Z" fill="#ffffff"/><path d="M95.4 502.3L97.5 503.8L100.0 504.5L97.9 503.0ZM100.4 544.6L105.4 548.0L111.0 550.4L105.9 547.1ZM77.2 500.9L80.5 505.1L84.4 508.8L81.1 504.5ZM53.8 517.8L57.2 520.2L61.0 522.0L57.6 519.6ZM125.8 545.3L128.4 545.9L131.0 545.7L128.4 545.1ZM95.6 530.8L101.2 531.5L106.9 531.1L101.3 530.4ZM108.0 499.5L110.1 502.7L113.0 505.1L111.0 501.9ZM77.4 501.1L80.0 503.8L83.4 505.4L80.8 502.7ZM105.4 501.0L109.5 501.8L113.7 501.5L109.6 500.7ZM96.2 500.5L98.0 503.0L100.3 505.1L98.5 502.6ZM57.3 509.4L61.2 514.0L66.0 517.8L62.0 513.2ZM87.4 497.2L91.0 501.3L95.0 505.1L91.4 500.9ZM124.4 511.9L128.0 513.1L131.8 513.5L128.2 512.4ZM87.3 547.6L93.7 547.7L100.0 547.0L93.6 546.9ZM91.0 536.6L94.0 539.5L97.5 542.0L94.4 539.0ZM104.8 510.0L106.8 512.7L109.4 514.7L107.4 512.0ZM98.0 537.1L100.0 539.0L102.3 540.3L100.4 538.5ZM80.5 532.2L83.0 535.1L86.0 537.5L83.6 534.5ZM155.0 526.5L160.3 527.4L165.7 527.6L160.4 526.6ZM132.6 542.0L138.0 545.3L143.7 547.9L138.3 544.7ZM76.5 513.9L80.4 518.8L85.0 523.2L81.1 518.2ZM76.8 513.7L82.5 516.1L88.5 517.9L82.7 515.4ZM139.0 530.8L142.9 534.7L147.6 537.9L143.6 533.9ZM85.5 508.0L91.0 509.5L96.6 510.3L91.1 508.8ZM74.0 534.9L76.7 535.5L79.5 535.4L76.7 534.9ZM111.8 505.0L115.3 510.0L119.8 514.1L116.3 509.1ZM79.7 495.4L84.2 495.6L88.6 494.7L84.1 494.5ZM99.4 502.8L104.0 504.6L109.0 505.3L104.3 503.5ZM134.7 539.3L137.0 541.4L139.9 542.3L137.6 540.3ZM82.0 522.8L87.2 524.4L92.6 525.2L87.4 523.6ZM76.2 504.8L82.2 505.3L88.3 504.6L82.2 504.2ZM88.0 510.3L90.6 514.0L93.8 517.2L91.2 513.5ZM142.0 527.0L143.6 529.5L145.8 531.4L144.3 528.9ZM143.2 538.6L144.8 540.7L147.0 542.3L145.4 540.1ZM64.9 497.8L67.6 501.8L71.3 505.0L68.6 500.9ZM92.6 540.9L95.8 542.6L99.3 543.0L96.1 541.4ZM116.6 527.0L120.6 527.6L124.5 527.4L120.6 526.8ZM72.8 503.1L77.3 505.6L82.0 507.5L77.6 505.0ZM126.3 500.6L129.5 501.7L132.9 501.6L129.7 500.5ZM111.2 494.1L115.3 494.3L119.4 493.5L115.2 493.3Z" fill="#070b1c"/><path d="M99.0 541.7L106.0 544.2L113.3 545.5L106.3 543.1ZM73.6 549.0L77.3 552.8L81.8 555.6L78.1 551.8ZM76.2 551.3L83.3 557.1L90.9 562.0L83.9 556.2ZM67.4 568.1L70.6 569.9L74.2 570.1L71.0 568.4ZM81.1 569.6L88.7 573.4L96.7 576.0L89.1 572.3ZM95.9 563.2L98.7 566.2L102.3 568.0L99.5 565.1ZM79.7 558.9L84.5 560.8L89.6 561.4L84.8 559.6ZM90.7 569.3L94.0 572.5L97.8 575.1L94.5 571.9ZM89.1 538.7L93.1 542.8L98.1 545.6L94.1 541.5ZM97.0 571.0L104.5 573.4L112.3 575.0L104.7 572.5ZM83.6 571.3L87.1 574.2L91.1 576.4L87.6 573.5ZM83.1 559.2L86.8 561.2L90.9 562.3L87.2 560.3ZM106.5 574.6L112.8 576.6L119.5 577.2L113.1 575.2ZM58.1 560.9L64.2 564.4L70.7 567.1L64.6 563.5ZM82.0 560.5L88.4 563.8L95.2 566.1L88.8 562.8ZM84.6 538.0L89.8 541.4L95.5 543.9L90.3 540.5ZM112.0 569.4L115.8 571.7L120.2 573.0L116.3 570.7ZM83.6 541.2L89.3 544.0L95.3 546.2L89.6 543.3ZM99.3 539.1L105.6 543.8L112.6 547.5L106.2 542.8ZM51.1 556.9L59.2 560.6L67.6 563.4L59.5 559.8ZM104.9 570.1L113.4 573.2L122.2 575.1L113.7 572.0ZM65.2 569.2L67.9 572.0L71.3 573.9L68.5 571.1ZM111.5 543.3L115.0 547.0L119.5 549.4L115.9 545.7ZM62.8 557.2L66.2 560.5L70.2 562.9L66.8 559.7ZM91.0 551.9L95.4 553.2L99.9 553.6L95.6 552.3ZM126.4 564.5L129.5 567.8L133.5 569.9L130.4 566.6ZM59.4 558.5L63.8 561.9L69.0 563.9L64.6 560.5ZM96.1 560.8L98.9 563.9L102.7 565.6L99.9 562.5ZM101.2 553.0L104.9 556.5L109.5 558.6L105.8 555.1ZM96.2 551.2L100.9 554.8L106.2 557.7L101.4 554.0ZM112.7 545.8L120.3 550.7L128.5 554.5L120.9 549.6ZM104.5 551.9L108.0 552.9L111.7 553.1L108.2 552.1ZM96.6 553.6L104.1 557.7L112.0 560.9L104.5 556.9ZM69.7 565.5L73.1 566.6L76.6 566.8L73.3 565.6ZM57.0 552.3L63.3 554.9L70.0 556.2L63.7 553.7ZM67.5 563.2L71.0 565.7L75.2 566.7L71.7 564.2ZM67.6 544.4L74.3 546.7L81.4 547.5L74.7 545.2ZM114.2 555.0L117.4 556.7L121.0 557.2L117.8 555.4ZM94.8 551.1L99.6 554.7L105.2 556.9L100.4 553.3ZM110.7 547.7L113.3 550.4L116.7 552.2L114.1 549.4Z" fill="#070b1c"/><path d="M58 510 L66 504 L72 514 L68 528 L62 540 L66 546 L60 544 L56 530Z" fill="#ffffff" filter="url(#r2)"/><path d="M88 530 L100 522 L112 520 L118 524 L108 530 L104 538 L96 542 L98 534Z" fill="#ffffff" filter="url(#r2)"/><path d="M138 566 L150 556 L162 546 L170 542 L168 552 L158 564 L146 572Z" fill="#ffffff" filter="url(#r1)"/><path d="M114 580 L124 578 L127 583 L118 586Z" fill="#ffffff" filter="url(#r1)"/><path d="M124 503 L132 502 L131 506 L125 507Z" fill="#ffffff" filter="url(#r1)"/><path d="M162 534 L174 524 L186 516 L188 522 L180 532 L170 540 L163 540Z" fill="#070b1c" filter="url(#r1)"/><path d="M131 560 L142 554 L150 552 L146 560 L136 564Z" fill="#070b1c" filter="url(#r1)"/><path d="M88 548 L104 554 L122 558 L120 561 L102 558 L88 552Z" fill="#070b1c" filter="url(#r3)"/><path d="M60 556 L74 572 L90 582 L108 588 L96 590 L80 586 L64 572Z" fill="#070b1c" filter="url(#r3)"/><path d="M81 587 L97.7 590.7 L121.6 589.5 L145.5 582.4 L164.6 577.6 L193 578.8 L217 575 L245.7 569 L260 568.5 L260 571.5 L245.7 572.5 L217 578.5 L193 582.3 L164.6 581.1 L145.5 586 L121.6 593 L97.7 594.2 L81 590.5Z" fill="#070b1c"/><path d="M168 574 L176 568 L192 566 L194 580 L170 580Z" fill="#070b1c" filter="url(#r1)"/><path d="M214 556 L222 553 L241 552.5 L260 551.5 L262 553 L241 554.5 L224 556 L216 560Z" fill="#070b1c"/><path d="M216 558 L226 556 L244 555 L262 554 L266 560 L256 563 L240 561 L226 564Z" fill="#ffffff" filter="url(#r1)"/><path d="M250 509.5 L260.8 506.7 L277 498.5 L290.5 493.2 L301.4 494.5 L305 497 L301 497.5 L290.5 496 L277 501.5 L260.8 509.5 L250 512Z" fill="#070b1c"/><path d="M262 560 L270 557 L276 561 L272 566 L264 566Z" fill="#070b1c" filter="url(#r1)"/><path d="M252 564 L258 562 L262 568 L254 570Z" fill="#070b1c" filter="url(#r1)"/><path d="M276 564 L290 563 L282 569.5 L268 571.5 L270 568Z" fill="#070b1c"/><path d="M238.2 424.3L238.8 429.4L240.3 434.2L239.7 429.2ZM239.9 439.0L239.6 442.1L241.0 444.9L241.3 441.8ZM240.1 433.7L239.4 436.5L240.1 439.4L240.7 436.5ZM238.5 420.8L237.5 425.9L238.3 430.9L239.3 425.9ZM241.9 429.5L241.3 433.4L242.0 437.3L242.6 433.4ZM236.1 425.8L235.9 429.4L237.6 432.6L237.8 429.0ZM241.5 437.0L240.7 440.2L241.7 443.4L242.4 440.2ZM239.2 436.0L238.6 439.3L239.7 442.4L240.4 439.1Z" fill="#ffffff"/><path d="M213.9 394.8L214.0 399.9L215.7 404.7L215.6 399.6ZM215.6 410.1L216.0 413.0L218.1 415.1L217.6 412.2ZM224.7 403.9L225.3 409.0L227.1 413.9L226.5 408.7ZM231.9 405.6L231.4 409.0L232.5 412.3L233.0 408.9ZM222.0 397.8L223.7 401.4L226.2 404.6L224.5 400.9ZM233.7 400.2L234.5 402.1L236.0 403.6L235.2 401.7ZM226.9 403.4L227.4 407.8L228.7 411.9L228.2 407.6ZM224.1 397.7L223.9 402.4L225.3 406.9L225.6 402.2ZM209.0 397.4L209.5 399.6L211.4 400.8L210.9 398.6ZM230.9 403.7L230.8 407.7L231.9 411.7L231.9 407.6ZM228.2 396.1L229.4 399.3L231.3 402.1L230.1 398.9ZM214.1 397.5L214.2 400.8L215.3 403.8L215.2 400.5ZM235.5 401.1L235.5 405.1L236.3 409.0L236.3 405.0ZM218.9 400.7L218.6 403.8L219.9 406.8L220.1 403.6Z" fill="#ffffff"/><path d="M273 402 L281 404 L289 410 L286 414 L278 412Z" fill="#070b1c" filter="url(#r1)"/><path d="M270 468 L277 448 L290 466 L283 469.7Z" fill="#070b1c" filter="url(#r1)"/><path d="M275 464 L278 456 L284 464Z" fill="#365a8f"/><path d="M274 203.5 L293 204 L315 221 L339 240 L354 253.5 L358 262 L346 258 L336 250 L322 240 L306 226 L292 212 L280 209 L275 216 L277 232 L280 248 L281 262 L274 262 L273 236 L270 217Z" fill="#070b1c" filter="url(#r1)"/><path d="M294.6 256 L300 260 L306 270 L308 279 L302 276 L297 266Z" fill="#070b1c" filter="url(#r1)"/><path d="M279 262 L286 270 L294 280 L304 292 L298 293 L288 284 L280 274Z" fill="#070b1c" filter="url(#r1)"/><path d="M333.4 256.7L338.0 255.8L341.7 252.8L337.0 253.7ZM320.3 268.3L324.4 267.6L327.8 265.3L323.8 265.9ZM330.5 272.5L336.2 268.1L340.8 262.6L335.1 267.0ZM343.9 258.0L349.5 256.4L354.6 253.5L349.0 255.1ZM338.4 266.8L344.4 261.4L349.6 255.2L343.5 260.5ZM340.4 269.0L347.9 266.0L354.7 261.7L347.2 264.6ZM327.9 260.5L332.5 259.8L336.2 256.8L331.6 257.6ZM321.3 273.5L327.2 270.8L331.8 266.1L325.9 268.9ZM318.0 265.1L325.9 261.0L332.7 255.2L324.7 259.2ZM338.0 260.9L342.6 258.5L345.7 254.5L341.1 256.8ZM337.6 271.1L343.2 267.1L347.4 261.6L341.7 265.5ZM331.4 258.5L339.6 253.3L347.0 247.1L338.7 252.2ZM315.5 261.2L324.0 257.2L331.9 252.0L323.3 256.1ZM316.6 260.2L322.7 256.0L327.9 250.7L321.8 254.9ZM321.1 257.4L329.3 254.7L337.2 251.0L328.9 253.6ZM323.6 275.6L331.8 272.4L339.1 267.7L331.0 270.9ZM320.2 267.9L324.4 264.6L327.5 260.2L323.3 263.5ZM309.8 262.6L317.8 259.6L324.9 255.0L317.0 258.0ZM335.7 265.8L341.9 260.8L346.9 254.6L340.7 259.6ZM339.5 274.6L346.3 270.8L351.8 265.4L345.0 269.1ZM324.4 259.7L333.4 256.0L341.3 250.4L332.3 254.1ZM337.0 272.8L344.4 269.5L351.0 264.7L343.6 268.0ZM323.9 268.7L329.3 264.6L333.1 259.0L327.7 263.1ZM339.5 268.3L345.1 264.5L349.5 259.4L343.9 263.2ZM332.3 264.0L341.2 259.6L349.5 254.0L340.5 258.4ZM336.6 271.5L342.9 268.1L347.8 262.7L341.4 266.1ZM311.1 268.3L318.4 262.8L323.9 255.6L316.7 261.1ZM330.5 256.3L337.3 253.1L343.0 248.2L336.2 251.3ZM329.9 267.3L336.9 264.8L343.1 260.9L336.1 263.3ZM339.1 260.9L344.0 259.7L347.6 256.4L342.8 257.5ZM325.3 255.6L330.6 251.7L335.1 246.9L329.9 250.8ZM327.3 262.3L333.1 259.9L338.2 256.2L332.4 258.6ZM318.2 269.2L325.2 267.0L331.8 263.5L324.7 265.7ZM344.5 261.9L348.8 259.4L351.6 255.3L347.3 257.8ZM342.2 268.4L348.8 264.5L354.5 259.5L348.0 263.4ZM346.6 262.5L355.1 258.7L362.5 253.0L354.0 256.8ZM330.7 259.1L335.4 257.4L338.7 253.8L334.1 255.5ZM325.4 273.0L330.7 269.3L335.0 264.5L329.7 268.2ZM327.4 260.6L333.6 254.6L338.7 247.6L332.5 253.6ZM320.3 260.6L326.4 257.5L331.3 252.7L325.2 255.8ZM333.7 261.7L342.6 258.5L351.1 254.3L342.1 257.4ZM340.1 256.6L347.6 253.6L354.6 249.6L347.1 252.6ZM338.8 259.0L342.7 256.0L345.6 252.0L341.7 255.0ZM340.1 264.5L347.8 258.4L354.0 250.7L346.3 256.8ZM331.9 272.1L340.9 268.1L348.7 262.3L339.8 266.2ZM343.1 258.0L350.1 255.3L356.0 250.7L349.0 253.4ZM328.8 272.6L333.9 270.0L338.3 266.3L333.2 268.8ZM316.8 266.0L322.0 261.3L326.3 255.7L321.1 260.4ZM327.8 266.3L336.0 261.4L343.6 255.6L335.4 260.5ZM342.7 264.8L350.3 261.3L356.5 255.8L349.0 259.3ZM326.8 260.9L331.4 260.1L335.2 257.5L330.6 258.3ZM334.3 255.1L342.1 251.7L348.5 246.2L340.8 249.6ZM332.6 262.4L336.9 261.6L340.3 259.0L336.0 259.7ZM335.3 260.1L341.4 258.2L346.8 254.8L340.6 256.6ZM332.1 271.6L337.6 267.6L342.0 262.3L336.4 266.3ZM331.1 274.3L338.7 268.8L345.2 262.1L337.6 267.6ZM327.7 261.8L336.7 256.8L344.6 250.1L335.6 255.1ZM343.2 261.1L348.3 258.0L352.2 253.5L347.1 256.5ZM335.6 273.7L342.3 268.0L347.2 260.9L340.5 266.5ZM334.7 253.7L338.3 251.6L340.9 248.5L337.4 250.6Z" fill="#070b1c"/><path d="M336.5 282.7L344.5 282.6L352.2 280.4L344.2 280.5ZM326.5 282.8L333.9 282.5L341.1 280.5L333.7 280.8ZM330.1 276.8L336.3 276.9L342.2 275.1L336.0 275.0ZM336.3 284.3L344.3 283.1L351.9 280.1L343.8 281.2ZM326.5 278.3L332.3 277.3L337.7 274.9L331.9 276.0ZM323.8 282.1L327.7 282.8L331.4 281.9L327.6 281.1ZM334.6 281.3L340.6 281.5L346.5 280.9L340.5 280.6ZM317.2 281.5L326.2 282.1L335.2 281.1L326.1 280.5ZM322.4 275.1L327.1 275.0L331.7 273.7L326.9 273.9ZM332.3 274.8L336.3 275.7L340.2 274.6L336.2 273.7ZM332.9 276.9L337.5 276.9L342.0 275.9L337.4 275.9ZM331.7 283.4L339.3 283.5L346.9 282.5L339.3 282.5ZM325.9 284.9L334.5 283.6L342.9 281.0L334.2 282.3ZM330.3 286.4L335.5 285.3L340.0 282.5L334.8 283.6ZM314.9 285.9L318.8 285.8L322.4 284.2L318.5 284.4ZM328.3 279.7L332.7 280.1L336.8 278.6L332.4 278.2ZM319.6 282.9L325.5 282.7L331.1 281.1L325.2 281.3ZM336.0 282.1L340.0 282.0L343.3 279.8L339.4 279.9ZM330.3 286.5L337.2 285.6L343.5 282.7L336.6 283.5ZM335.6 283.1L341.6 282.4L346.9 279.7L341.0 280.4ZM317.4 284.0L326.0 283.6L334.2 281.2L325.6 281.6ZM314.0 280.3L322.1 279.9L329.9 277.5L321.8 277.9Z" fill="#070b1c"/><path d="M309.8 243.3L311.8 247.2L315.1 250.1L313.1 246.2ZM310.1 235.3L311.9 239.6L314.5 243.5L312.7 239.2ZM297.2 239.5L301.6 244.5L307.1 248.3L302.7 243.2ZM286.4 232.0L289.0 236.6L292.4 240.6L289.8 236.0ZM287.4 237.6L289.8 242.3L292.9 246.5L290.6 241.8ZM308.0 239.0L311.7 243.5L316.5 246.8L312.8 242.3ZM311.6 228.5L315.0 233.2L319.2 237.3L315.8 232.6ZM285.0 215.3L287.1 219.6L290.4 223.1L288.3 218.8ZM293.6 230.6L295.5 233.4L298.6 234.8L296.7 232.0ZM290.9 210.8L294.6 216.5L299.0 221.7L295.3 216.0ZM301.9 223.4L303.6 226.1L305.9 228.2L304.2 225.5ZM294.5 230.1L299.0 235.1L304.4 239.3L299.9 234.2ZM285.5 217.2L287.6 219.8L290.6 221.2L288.5 218.7ZM311.4 223.8L314.5 230.5L318.2 236.9L315.2 230.1ZM298.0 223.1L303.6 228.3L309.8 232.7L304.3 227.5ZM299.7 232.1L302.1 237.9L305.4 243.2L303.1 237.4ZM294.4 211.5L297.5 218.6L301.5 225.3L298.4 218.2ZM290.7 242.0L293.7 248.3L297.4 254.3L294.4 247.9ZM306.9 234.1L311.1 240.6L316.0 246.6L311.8 240.1ZM282.9 236.7L285.3 242.5L288.7 247.7L286.3 241.9ZM300.1 239.5L303.3 242.7L307.2 245.2L304.0 241.9ZM281.8 228.5L284.7 231.6L288.1 234.0L285.3 230.9ZM302.7 215.3L308.4 220.2L314.6 224.3L309.0 219.4ZM294.6 209.7L297.3 216.2L301.2 222.1L298.5 215.5ZM295.4 221.1L297.5 226.0L300.8 230.1L298.7 225.2ZM280.6 216.9L285.3 221.4L290.8 224.8L286.1 220.3ZM287.4 225.7L290.1 229.1L293.9 231.3L291.2 227.8ZM290.5 215.3L292.7 219.3L296.3 222.2L294.0 218.2ZM303.9 217.1L306.3 220.8L309.6 223.8L307.1 220.1ZM284.6 219.6L287.3 227.0L291.5 233.6L288.8 226.2ZM282.3 220.7L283.2 223.9L285.5 226.4L284.6 223.2ZM288.0 213.5L293.2 218.1L299.3 221.7L294.0 217.1ZM285.5 225.9L286.8 229.7L289.4 233.0L288.0 229.1ZM282.1 213.8L285.1 219.5L289.0 224.6L285.9 218.9ZM301.5 229.1L303.9 232.3L307.2 234.6L304.8 231.3ZM305.9 241.3L308.0 244.7L310.7 247.6L308.6 244.2ZM307.5 225.6L308.6 228.8L311.1 231.0L310.0 227.9ZM290.7 241.0L293.1 245.9L296.1 250.3L293.8 245.5ZM314.3 227.3L316.0 231.3L318.5 234.8L316.8 230.8ZM309.6 223.6L312.8 227.2L316.9 229.8L313.7 226.2Z" fill="#070b1c"/><path d="M277.8 246.4L278.6 250.9L280.3 255.2L279.5 250.7ZM288.6 258.9L288.2 262.8L289.4 266.4L289.8 262.6ZM281.8 254.6L283.5 260.5L286.9 265.5L285.2 259.6ZM284.8 246.0L285.5 250.6L287.1 255.0L286.3 250.4ZM281.2 260.1L281.8 263.0L283.8 265.3L283.2 262.3ZM286.1 247.9L286.9 253.2L288.7 258.2L287.9 252.9ZM289.9 256.0L290.5 259.0L292.5 261.4L291.8 258.4ZM284.3 237.4L285.6 241.4L287.7 244.9L286.5 241.0ZM285.4 260.0L286.5 264.8L289.2 268.8L288.1 264.1ZM281.0 259.0L280.6 263.1L281.6 267.1L282.0 263.0ZM288.9 245.0L289.9 251.3L292.6 257.0L291.6 250.8ZM282.4 235.6L282.8 239.9L285.1 243.6L284.7 239.3ZM288.4 259.8L289.5 264.3L292.4 268.0L291.3 263.5ZM283.5 250.9L284.5 255.5L286.4 259.7L285.3 255.2ZM283.7 247.5L284.2 250.6L286.4 252.9L285.9 249.8ZM287.3 256.4L287.4 262.4L288.5 268.4L288.3 262.3ZM287.3 237.1L287.3 240.8L288.7 244.2L288.7 240.5ZM290.3 250.6L291.3 255.1L293.6 259.1L292.6 254.6ZM290.6 236.7L291.9 241.7L294.0 246.3L292.8 241.3ZM286.4 264.8L286.7 268.4L288.2 271.7L288.0 268.1Z" fill="#070b1c"/><path d="M312 308 L322 304 L334 310 L340 324 L338 340 L330 350 L322 352 L318 370 L320 390 L328.6 405.4 L320.9 428.6 L308 454.3 L301.6 477.5 L305.4 492.9 L298 494 L294 478 L300 454 L312 428 L316 408 L312 392 L310 370 L312 350 L318 336 L314 322Z" fill="#070b1c" filter="url(#r1)"/><path d="M322.3 393.2L321.6 397.5L322.6 401.7L323.4 397.4ZM320.8 400.4L319.6 404.4L320.6 408.4L321.8 404.5ZM328.3 413.5L325.9 420.3L325.2 427.5L327.6 420.7ZM326.3 406.3L323.9 412.8L323.6 419.8L326.0 413.3ZM319.5 395.7L318.4 402.1L319.2 408.5L320.3 402.1ZM324.0 382.3L322.3 390.5L322.4 398.9L324.1 390.7ZM323.3 405.6L321.9 414.5L322.3 423.6L323.7 414.6ZM325.2 389.6L324.8 398.0L326.4 406.3L326.9 397.9ZM316.9 401.9L315.1 409.3L314.8 416.9L316.6 409.5ZM325.8 392.3L324.1 397.6L324.9 403.2L326.6 397.8ZM325.8 426.5L322.4 432.0L321.4 438.5L324.9 433.0ZM326.7 420.2L324.1 427.8L324.1 435.8L326.7 428.2ZM327.3 410.5L324.6 419.1L324.2 428.0L326.9 419.5ZM323.4 422.8L319.9 428.8L318.3 435.6L321.8 429.6ZM322.8 408.0L320.4 412.6L319.8 417.8L322.3 413.2ZM323.4 401.3L321.4 409.1L322.2 417.1L324.2 409.3ZM322.0 407.0L321.2 412.2L322.0 417.4L322.8 412.2ZM322.6 410.4L322.1 419.1L323.5 427.7L324.0 419.0ZM328.7 427.7L325.9 431.5L324.9 436.1L327.7 432.3ZM317.2 409.7L314.3 418.0L314.2 426.8L317.0 418.5ZM323.7 433.6L321.3 439.7L321.4 446.2L323.8 440.1ZM321.7 402.6L319.0 407.5L319.2 413.2L321.9 408.2ZM324.2 410.7L323.5 416.3L324.7 421.9L325.5 416.2ZM326.2 410.5L321.9 418.3L319.5 426.9L323.9 419.1ZM323.5 416.4L320.1 420.7L318.8 426.1L322.2 421.7ZM327.1 389.6L325.0 398.4L325.8 407.5L327.8 398.6ZM325.0 388.7L320.9 395.0L319.3 402.3L323.5 396.1ZM321.3 391.5L319.8 397.8L320.5 404.2L322.0 397.9ZM319.3 392.5L316.7 398.9L316.0 405.8L318.6 399.4ZM317.3 405.6L314.4 410.2L313.9 415.5L316.8 411.0ZM328.0 414.9L325.7 419.0L325.6 423.7L327.8 419.6ZM324.4 397.0L321.3 402.9L321.1 409.6L324.2 403.7ZM322.9 406.2L321.7 410.6L323.2 414.9L324.4 410.5ZM319.8 409.6L316.1 415.6L315.0 422.6L318.7 416.6ZM327.4 400.9L325.0 405.9L324.2 411.4L326.6 406.4ZM321.4 388.7L317.8 394.6L316.1 401.2L319.6 395.3ZM320.7 400.8L320.1 409.4L321.9 417.7L322.5 409.2ZM329.6 407.2L327.8 411.8L327.3 416.7L329.1 412.1ZM321.2 430.1L318.3 434.5L317.6 439.8L320.5 435.4ZM330.4 410.4L327.5 414.4L326.4 419.2L329.4 415.2Z" fill="#070b1c"/><path d="M312.8 435.8L310.0 443.8L309.3 452.3L312.1 444.3ZM312.8 439.7L311.3 445.1L311.4 450.6L312.9 445.3ZM310.7 433.4L307.9 438.4L307.0 444.1L309.8 439.1ZM313.3 446.1L311.7 450.4L311.8 455.1L313.5 450.7ZM311.2 442.7L309.6 450.0L309.4 457.5L311.0 450.2ZM305.4 468.8L303.4 474.6L304.1 480.7L306.2 474.9ZM314.0 433.6L311.3 440.7L310.5 448.3L313.2 441.2ZM315.3 452.3L313.5 458.1L313.3 464.2L315.1 458.4ZM314.4 440.2L310.0 445.5L307.4 451.9L311.7 446.5ZM305.7 455.1L303.7 463.3L303.2 471.7L305.2 463.5ZM309.6 452.4L307.2 459.9L306.7 467.8L309.2 460.3ZM311.4 455.8L309.5 461.2L309.0 466.9L310.9 461.5ZM305.0 468.5L302.7 475.4L301.9 482.6L304.2 475.7ZM310.5 446.2L308.2 450.9L307.3 456.0L309.6 451.3ZM306.1 436.8L304.5 444.2L304.6 451.8L306.3 444.4ZM310.5 470.9L305.4 477.8L302.8 486.0L307.9 479.1ZM303.2 439.5L301.6 446.8L302.5 454.1L304.1 446.9ZM308.8 446.8L305.1 453.3L303.0 460.5L306.7 454.0ZM314.6 446.4L312.1 450.3L311.2 454.8L313.6 450.9ZM315.3 466.3L313.1 469.4L312.2 473.1L314.4 470.0ZM304.4 437.4L302.6 442.8L302.1 448.4L303.9 443.0ZM306.5 456.8L304.2 464.8L304.2 473.0L306.5 465.1ZM313.0 438.7L310.1 445.5L309.0 452.8L312.0 446.0ZM312.4 439.0L310.7 447.2L311.4 455.6L313.1 447.4ZM303.9 464.1L301.3 472.4L301.2 481.1L303.9 472.8ZM304.1 460.3L300.9 467.4L300.3 475.2L303.6 468.1ZM308.1 432.5L303.7 436.7L301.8 442.5L306.2 438.3ZM314.0 463.8L309.8 469.4L307.3 476.1L311.6 470.4ZM303.5 461.8L300.3 467.5L300.0 474.0L303.2 468.3ZM303.2 463.7L301.4 471.0L302.3 478.5L304.2 471.2ZM308.5 454.4L303.7 459.7L300.8 466.2L305.6 460.9ZM306.8 448.4L305.2 453.5L305.2 458.8L306.8 453.7ZM311.7 461.7L309.8 466.3L310.1 471.3L312.0 466.7ZM308.4 474.8L305.8 479.5L306.0 484.8L308.6 480.1ZM304.8 453.3L301.9 460.9L301.2 469.0L304.1 461.4ZM314.4 435.2L310.7 441.0L308.9 447.8L312.6 441.9ZM312.2 469.5L310.8 474.5L311.2 479.7L312.7 474.7ZM307.4 437.4L304.2 442.5L302.4 448.3L305.6 443.2ZM306.6 452.1L304.8 456.3L304.5 460.7L306.2 456.6ZM315.3 429.0L310.5 436.7L307.7 445.3L312.6 437.7Z" fill="#070b1c"/><path d="M310.8 361.6L310.3 365.6L311.8 369.3L312.3 365.3ZM318.7 366.3L316.9 372.3L316.8 378.4L318.5 372.5ZM310.6 341.6L311.8 348.4L315.3 354.2L314.1 347.5ZM313.5 343.2L312.2 350.3L313.6 357.3L314.9 350.3ZM312.7 373.7L311.2 380.1L311.4 386.8L312.9 380.3ZM311.3 377.6L311.2 382.5L313.1 387.0L313.2 382.1ZM313.7 379.5L313.4 382.8L315.2 385.7L315.5 382.3ZM317.7 374.6L316.2 381.9L317.3 389.3L318.9 382.0ZM314.7 361.7L314.9 366.3L317.2 370.2L317.0 365.7ZM309.6 370.5L309.6 375.8L312.4 380.3L312.3 375.0ZM315.4 347.5L314.0 350.5L315.2 353.6L316.5 350.6ZM319.7 376.0L319.1 380.5L320.8 384.7L321.4 380.2ZM315.3 357.0L315.1 362.3L317.1 367.1L317.3 361.9ZM311.3 350.1L311.1 355.9L312.7 361.5L312.8 355.7ZM315.2 356.8L312.6 363.8L312.6 371.3L315.2 364.2ZM315.4 375.7L316.4 381.9L319.5 387.5L318.5 381.2ZM314.4 364.3L312.5 369.4L312.7 374.8L314.7 369.7ZM314.0 355.1L312.8 358.1L313.2 361.3L314.3 358.3ZM316.2 357.5L317.3 363.6L320.1 369.2L319.0 363.1ZM316.6 356.1L316.1 361.9L317.4 367.5L317.9 361.8ZM318.5 361.6L319.9 368.6L322.8 375.2L321.4 368.2ZM309.9 362.3L310.1 367.8L312.3 372.8L312.2 367.3ZM311.1 364.4L311.7 370.0L314.4 374.8L313.7 369.3ZM309.3 356.6L309.7 361.8L312.6 366.2L312.2 361.0ZM316.8 373.2L315.2 376.7L316.4 380.3L318.0 376.8ZM319.1 341.2L317.9 346.0L318.2 351.0L319.4 346.2ZM321.8 365.5L320.3 369.1L321.3 372.8L322.7 369.2ZM315.9 345.4L316.2 351.8L318.4 357.9L318.1 351.5ZM321.3 366.4L319.3 371.9L320.0 377.7L322.0 372.2ZM320.7 344.8L319.2 349.3L320.2 354.0L321.7 349.5Z" fill="#070b1c"/><path d="M339 309.8 L349.5 287 L353.6 276.8 L368 269.6 L392.7 267.5 L396.8 258.2 L407 254.5 L431.9 257.2 L450 253 L470 253 L470 366 L450 365.4 L444 349 L434 328.3 L423.6 322 L407 318 L392.7 321 L382.4 326.2 L372 332.4 L368 342.7 L357.7 349 L351.5 357 L339 349 L333 336.5 L335 322Z" fill="#070b1c" filter="url(#r1)"/><path d="M415.1 273.9L415.4 269.8L413.8 266.0L413.5 270.1ZM436.9 273.5L436.4 268.5L434.8 263.9L435.3 268.8ZM404.9 275.8L404.8 269.5L402.9 263.5L403.0 269.8ZM379.6 268.1L381.2 262.4L381.1 256.5L379.5 262.2ZM369.3 274.3L369.5 269.5L368.4 264.9L368.2 269.7ZM415.8 270.5L415.8 264.5L414.2 258.6L414.2 264.7ZM413.8 271.9L415.8 270.1L416.5 267.5L414.6 269.3ZM369.3 271.0L372.5 266.3L374.8 261.0L371.6 265.8ZM373.3 273.7L375.3 270.1L375.9 266.0L373.8 269.6ZM372.2 276.1L373.5 270.2L373.2 264.2L371.8 270.1ZM366.5 270.0L366.9 263.9L365.6 257.9L365.2 264.0ZM387.9 269.5L389.6 265.8L389.8 261.7L388.2 265.4ZM397.4 274.8L397.6 271.6L396.1 268.8L395.9 272.0ZM381.2 266.8L382.6 263.4L382.4 259.8L381.0 263.1ZM400.8 273.7L402.9 272.0L403.7 269.3L401.6 271.0ZM419.6 275.1L422.5 270.8L423.7 265.9L420.9 270.1ZM386.5 268.8L390.0 263.8L391.5 257.9L388.1 262.9ZM412.4 268.7L415.2 264.0L416.7 258.6L413.8 263.3ZM409.9 268.2L411.3 264.3L411.7 260.2L410.3 264.1ZM384.5 267.5L387.6 264.3L389.5 260.2L386.4 263.5ZM379.3 265.9L380.0 262.8L379.6 259.8L379.0 262.8ZM429.1 270.2L430.3 265.5L430.3 260.7L429.0 265.4ZM382.4 268.1L385.1 264.1L385.8 259.3L383.1 263.3ZM386.5 273.8L387.8 271.2L387.9 268.3L386.7 270.9ZM406.2 277.4L407.2 271.9L406.7 266.3L405.7 271.8ZM398.8 274.3L399.3 270.8L398.7 267.3L398.3 270.8ZM372.0 266.4L373.9 263.5L374.3 260.1L372.5 263.0ZM373.6 271.7L376.6 267.5L378.4 262.7L375.5 266.9ZM405.5 266.4L408.7 261.3L410.7 255.5L407.5 260.7ZM369.7 268.1L371.8 262.4L372.2 256.4L370.1 262.1ZM384.9 272.9L387.0 269.3L387.4 265.1L385.3 268.7ZM386.8 263.4L387.9 260.8L387.3 258.0L386.1 260.6ZM385.9 269.3L387.5 266.1L387.7 262.5L386.0 265.7ZM406.2 276.7L406.1 271.7L404.1 267.0L404.2 272.0ZM386.7 264.2L387.3 261.0L385.9 258.1L385.4 261.2ZM392.7 271.0L394.7 266.7L395.0 261.9L393.0 266.2ZM406.8 267.2L409.0 264.3L409.5 260.7L407.3 263.6ZM421.0 274.9L422.2 269.3L421.1 263.7L420.0 269.3ZM395.0 269.5L396.8 263.4L397.5 257.2L395.7 263.2ZM359.0 271.0L361.4 265.9L362.4 260.4L360.0 265.5ZM421.2 264.0L421.0 261.0L419.8 258.1L420.0 261.2ZM400.8 272.9L400.9 266.6L399.5 260.4L399.4 266.7ZM369.6 267.9L372.5 262.3L374.3 256.4L371.4 261.9ZM399.7 273.3L400.7 267.7L400.1 261.9L399.1 267.6ZM386.8 276.2L386.4 270.8L385.0 265.5L385.4 270.9ZM410.3 267.2L412.4 265.2L412.9 262.4L410.9 264.4ZM390.1 275.3L393.3 271.4L395.5 266.8L392.3 270.7ZM379.8 266.6L380.8 263.2L380.6 259.7L379.5 263.1ZM420.7 274.2L421.4 267.7L420.7 261.2L420.1 267.7ZM402.7 267.2L406.1 262.2L408.4 256.6L405.0 261.6Z" fill="#070b1c"/><path d="M380.8 283.5L382.8 280.1L383.3 276.3L381.3 279.6ZM377.1 281.4L380.2 277.7L381.5 272.9L378.4 276.7ZM358.2 285.8L361.3 281.0L362.6 275.4L359.4 280.2ZM356.3 282.5L359.6 280.8L362.3 278.2L359.0 280.0ZM357.5 282.0L358.9 279.0L358.6 275.7L357.1 278.7ZM351.4 277.5L356.3 274.9L359.8 270.7L355.0 273.3ZM359.7 281.6L362.0 280.0L363.1 277.5L360.8 279.0ZM360.8 277.7L362.4 275.4L361.7 272.6L360.2 275.0ZM363.8 284.9L365.2 280.7L365.5 276.2L364.1 280.4ZM367.2 274.5L369.9 272.8L371.1 269.8L368.4 271.5ZM370.3 275.5L373.0 271.8L373.8 267.2L371.0 270.9ZM361.1 276.2L366.5 273.3L370.8 269.0L365.4 271.8ZM362.1 274.8L363.4 272.3L363.8 269.5L362.4 272.0ZM370.2 278.2L372.8 275.2L374.5 271.6L371.9 274.6ZM377.0 281.8L380.3 278.3L382.0 273.9L378.7 277.3ZM379.2 278.7L381.7 275.2L382.2 270.9L379.7 274.4ZM366.2 277.4L368.5 275.1L368.8 271.9L366.5 274.1ZM386.7 276.3L389.6 273.4L391.4 269.8L388.5 272.7ZM355.8 275.2L360.7 272.2L364.1 267.6L359.2 270.6ZM352.1 283.1L354.8 278.6L355.8 273.6L353.2 278.0ZM382.5 281.5L386.7 276.5L389.8 270.8L385.6 275.8ZM375.0 283.8L377.8 279.2L379.4 274.0L376.5 278.6ZM370.7 280.3L373.7 277.9L375.4 274.4L372.4 276.8ZM371.6 275.6L374.6 273.3L375.8 269.8L372.9 272.1ZM368.7 282.4L371.5 279.0L373.2 274.9L370.4 278.3ZM370.2 281.2L373.7 276.6L376.1 271.4L372.6 276.0ZM356.5 284.3L359.8 280.3L361.3 275.4L358.0 279.4ZM349.5 278.5L354.1 275.0L357.9 270.6L353.3 274.2ZM357.5 276.9L359.1 273.2L358.8 269.2L357.2 272.8ZM372.2 279.5L374.0 275.6L373.5 271.4L371.8 275.3Z" fill="#070b1c"/><path d="M432.4 257.0L431.0 261.4L431.0 266.0L432.4 261.6ZM399.3 260.1L398.5 263.8L398.7 267.5L399.5 263.8ZM412.4 258.4L411.8 260.4L412.1 262.4L412.7 260.4ZM424.0 253.3L423.7 257.6L424.4 261.9L424.7 257.6ZM410.3 257.3L408.8 259.2L408.5 261.5L410.1 259.7ZM442.1 254.5L440.9 258.9L441.0 263.5L442.2 259.1ZM412.7 254.3L411.6 257.3L411.9 260.6L413.0 257.5ZM409.0 256.7L407.2 260.9L406.5 265.5L408.2 261.2ZM414.3 260.5L412.4 262.4L411.9 265.1L413.9 263.2ZM433.6 257.8L432.3 260.6L431.8 263.7L433.1 260.8ZM436.0 257.3L434.6 260.6L434.7 264.3L436.1 260.9ZM426.3 257.0L425.0 261.5L424.9 266.3L426.1 261.7ZM418.9 262.4L417.8 265.8L417.9 269.4L419.0 266.0ZM440.6 260.6L439.1 263.6L438.4 266.8L439.8 263.8ZM432.4 258.4L430.4 262.4L429.2 266.7L431.2 262.7ZM395.8 262.4L394.6 264.4L394.8 266.7L396.0 264.7ZM432.1 257.7L432.1 261.9L433.2 266.0L433.2 261.8ZM438.8 262.7L438.4 265.8L439.2 268.8L439.6 265.7ZM406.6 256.8L405.7 259.6L406.4 262.4L407.3 259.7ZM423.6 260.0L422.8 262.0L423.1 264.3L423.8 262.2ZM443.2 262.4L441.6 264.8L440.8 267.6L442.4 265.2ZM393.4 258.9L392.5 262.3L392.8 265.8L393.7 262.4ZM426.0 258.2L424.3 260.4L424.0 263.1L425.8 261.0ZM423.5 253.8L422.8 257.5L423.2 261.2L423.9 257.5Z" fill="#365a8f"/><ellipse cx="368" cy="301.5" rx="16" ry="15.5" fill="#365a8f" filter="url(#r1)" transform="rotate(-20 368 301.5)"/><path d="M368.9 295.2L370.6 300.1L373.4 304.4L371.7 299.5ZM372.6 304.7L372.8 308.7L375.0 312.2L374.8 308.1ZM367.0 306.6L368.3 310.3L371.0 313.0L369.7 309.4ZM359.6 299.9L361.6 305.1L365.0 309.6L363.0 304.4ZM374.2 298.5L374.8 303.1L376.6 307.5L376.0 302.8ZM362.0 304.3L364.3 309.4L367.6 313.9L365.3 308.8ZM366.0 300.9L367.7 306.2L370.9 310.8L369.2 305.5ZM372.9 291.5L372.9 294.9L374.1 298.0L374.1 294.6ZM370.6 297.1L370.5 300.1L372.4 302.4L372.4 299.4ZM364.3 304.7L365.9 309.7L369.4 313.6L367.7 308.6ZM366.2 290.4L367.5 294.8L369.9 298.8L368.6 294.4ZM369.1 291.1L370.2 295.9L372.6 300.2L371.5 295.4ZM372.7 293.4L372.2 296.2L373.7 298.7L374.2 295.9ZM368.4 294.7L369.8 299.5L372.5 303.7L371.2 298.9ZM368.5 305.5L369.2 309.7L371.0 313.6L370.2 309.4ZM362.7 293.7L362.9 299.0L364.3 304.1L364.1 298.8ZM369.4 306.3L371.0 311.8L374.1 316.6L372.5 311.1ZM360.8 297.1L361.1 300.3L363.0 302.9L362.7 299.7ZM363.1 305.9L363.5 308.5L365.3 310.4L364.9 307.8ZM361.8 299.6L362.0 304.1L363.6 308.2L363.4 303.8ZM359.2 299.3L361.2 303.5L364.0 307.2L362.1 303.0ZM369.6 296.1L370.9 300.6L373.3 304.6L371.9 300.1ZM366.3 305.2L366.4 309.3L367.6 313.1L367.5 309.1ZM362.2 300.4L362.4 303.2L364.0 305.5L363.8 302.7ZM362.7 300.3L363.4 303.8L365.2 307.0L364.5 303.4ZM366.7 295.0L367.4 298.2L369.8 300.3L369.1 297.2Z" fill="#ffffff"/><path d="M366.9 306.9L369.5 312.0L373.2 316.3L370.6 311.2ZM375.6 301.6L375.6 304.8L377.2 307.5L377.2 304.3ZM360.4 294.7L361.8 298.2L364.4 300.9L363.0 297.4ZM363.2 307.9L365.0 311.9L367.7 315.3L365.9 311.3ZM371.5 306.8L371.6 309.4L372.7 311.6L372.6 309.1ZM369.8 309.9L371.5 314.1L374.6 317.4L372.9 313.2ZM376.2 295.7L376.0 299.7L377.7 303.4L377.8 299.3ZM366.4 298.3L367.4 301.4L369.7 303.6L368.8 300.5ZM372.8 292.8L373.5 295.5L375.1 297.8L374.4 295.1ZM363.2 293.5L363.0 299.4L364.5 305.1L364.7 299.2ZM368.4 297.5L368.7 303.1L370.7 308.3L370.4 302.8ZM371.5 291.3L372.2 296.6L374.5 301.5L373.8 296.1ZM359.9 305.2L360.2 308.2L362.2 310.4L361.9 307.4ZM371.2 303.9L373.0 308.9L376.4 312.9L374.6 307.9Z" fill="#a9bbdc"/><ellipse cx="436" cy="298" rx="15" ry="14" fill="#365a8f" filter="url(#r1)"/><path d="M446.0 298.4L442.8 302.5L441.0 307.4L444.2 303.3ZM438.5 299.4L435.4 303.9L433.4 309.0L436.5 304.5ZM445.8 297.3L443.5 299.0L442.9 301.8L445.2 300.1ZM443.1 292.3L441.1 294.8L440.1 297.7L442.1 295.3ZM438.2 289.6L435.5 294.5L434.5 300.0L437.1 295.1ZM442.8 292.8L439.6 296.9L438.0 301.8L441.1 297.7ZM437.7 287.6L434.9 292.1L433.3 297.2L436.1 292.7ZM439.6 302.4L437.9 304.0L437.4 306.4L439.2 304.7ZM443.5 294.1L441.4 297.4L440.5 301.3L442.6 298.0ZM434.6 292.8L431.9 296.4L430.2 300.6L433.0 297.0ZM432.1 291.9L429.6 295.0L428.7 298.8L431.2 295.7ZM442.9 290.8L441.1 292.5L440.9 295.1L442.8 293.3ZM433.9 292.4L431.5 295.0L430.0 298.3L432.4 295.7ZM445.1 297.6L442.6 300.4L441.3 303.9L443.9 301.2ZM445.9 296.7L443.5 298.6L442.7 301.5L445.1 299.6ZM431.9 296.6L430.6 299.3L431.3 302.3L432.6 299.5ZM437.1 300.5L435.8 303.8L435.5 307.4L436.8 304.1ZM439.1 301.4L436.9 304.4L436.6 308.2L438.8 305.1ZM443.9 297.2L442.6 301.6L442.7 306.1L444.0 301.8ZM446.2 292.7L443.7 296.5L442.4 300.9L444.9 297.1ZM439.5 298.4L436.8 301.5L435.2 305.3L437.9 302.2ZM443.8 298.3L441.5 301.6L440.9 305.5L443.2 302.3ZM444.3 300.5L442.7 302.4L442.2 304.8L443.8 303.0ZM438.9 296.6L437.5 300.1L437.9 303.9L439.3 300.3Z" fill="#ffffff"/><path d="M441.3 291.7L439.2 294.3L438.3 297.5L440.5 295.0ZM437.5 303.9L434.7 308.2L433.3 313.3L436.1 308.9ZM436.7 304.0L434.1 308.0L432.5 312.5L435.1 308.5ZM432.7 296.0L429.7 300.2L427.8 305.0L430.8 300.8ZM431.2 296.9L429.1 298.9L428.4 301.8L430.5 299.7ZM430.8 291.9L429.8 295.2L430.0 298.5L431.0 295.3ZM432.3 292.7L430.2 294.9L429.2 297.7L431.2 295.5ZM436.6 287.6L435.1 291.0L434.9 294.7L436.4 291.3ZM438.0 301.1L435.5 305.5L434.0 310.4L436.6 306.0ZM431.4 300.1L429.3 303.9L428.6 308.2L430.8 304.4ZM443.6 289.2L441.4 294.3L440.5 299.8L442.7 294.7ZM433.9 296.7L432.3 301.5L431.6 306.5L433.2 301.7Z" fill="#a9bbdc"/><circle cx="352.5" cy="324.5" r="12.3" fill="#365a8f"/><circle cx="352.5" cy="324.5" r="9.3" fill="#070b1c"/><path d="M344.500 322a8.500 8.500 0 0 1 13-5" stroke="#8fa6d0" stroke-width="1.400" fill="none"/><ellipse cx="349.5" cy="321.5" rx="2.6" ry="1.8" fill="#fff"/><path d="M341 330a12.500 12.500 0 0 0 18 6" stroke="#dfe6f4" stroke-width="1.200" fill="none"/><path d="M396.8 322.5 L408 319.5 L423.6 324 L422 328 L408 323.5 L398 326Z" fill="#ffffff"/><path d="M391.5 337 L397 331 L405 331.5 L408.5 340 L406 349.5 L399 351 L393.5 346Z" fill="#070b1c" filter="url(#r1)"/><path d="M410.5 333 L415 326.5 L424 328 L429.5 338 L427.5 349 L419 353 L411.5 347Z" fill="#070b1c" filter="url(#r1)"/><path d="M400 347 L408 344 L414 348 L412 354 L404 353Z" fill="#070b1c" filter="url(#r1)"/><path d="M388 342 L394 344 L397 348 L390 346Z" fill="#ffffff"/><path d="M436 324 L444 321 L450 323 L450 332 L440 331Z" fill="#070b1c"/><circle cx="444" cy="324.5" r="1.6" fill="#fff"/><path d="M318 342 L324 338.6 L330 342 L332 360 L330 376 L336 388 L344 398 L352 408 L344 410 L334 402 L326 390 L320 376 L317 358Z" fill="#ffffff" filter="url(#r1)"/><path d="M336 372 L346 364 L358 358 L370 356 L378 360 L372 368 L376 374 L366 380 L356 388 L348 392 L342 386Z" fill="#ffffff" filter="url(#r3)"/><path d="M340 352 L352 346 L362 346 L356 352 L346 358Z" fill="#ffffff" filter="url(#r3)"/><path d="M361.8 379.2L370.6 374.4L378.9 368.8L370.1 373.5ZM352.1 382.3L358.5 380.4L364.2 376.9L357.8 378.9ZM329.6 370.4L339.2 366.9L348.2 362.0L338.6 365.6ZM355.8 385.3L364.8 380.9L373.1 375.1L364.1 379.6ZM343.2 371.0L349.2 369.2L354.9 366.6L348.9 368.3ZM365.0 376.8L372.7 373.7L379.7 369.1L372.0 372.2ZM334.7 371.3L340.3 367.7L345.1 363.0L339.5 366.7ZM365.6 379.9L371.8 377.7L377.4 374.1L371.2 376.4ZM337.3 385.7L346.2 382.8L354.8 379.0L345.9 381.9ZM354.9 384.2L364.0 380.4L372.2 375.0L363.1 378.9ZM357.9 385.6L366.9 382.0L375.5 377.6L366.5 381.2ZM359.8 380.6L365.2 378.5L370.2 375.7L364.8 377.7ZM356.1 384.7L360.8 382.1L365.0 378.8L360.3 381.3ZM329.4 379.9L338.3 377.8L346.9 374.7L338.0 376.7ZM359.1 361.2L364.9 359.5L370.5 357.1L364.6 358.8ZM358.0 363.6L362.0 361.7L365.3 358.8L361.3 360.6ZM351.2 387.1L358.7 381.6L365.6 375.4L358.1 380.9ZM338.7 379.1L344.2 376.5L349.1 372.7L343.5 375.3ZM335.9 386.2L344.1 381.5L351.3 375.4L343.1 380.1ZM353.7 359.4L357.9 358.5L361.5 356.4L357.4 357.3ZM344.8 362.5L352.9 359.5L360.5 355.3L352.4 358.3ZM346.7 374.7L352.0 373.1L356.5 370.0L351.2 371.6ZM372.0 368.1L376.5 367.5L380.6 365.6L376.1 366.3ZM332.1 374.0L340.1 371.2L347.7 367.2L339.6 370.0ZM344.0 365.6L349.3 363.1L354.0 359.8L348.8 362.3ZM361.8 375.1L366.8 373.1L371.0 369.9L366.0 371.8ZM335.1 368.8L343.1 365.8L350.2 361.2L342.3 364.2ZM370.4 380.4L374.7 379.1L378.5 377.0L374.3 378.2ZM360.5 379.4L366.0 376.3L371.0 372.4L365.5 375.5ZM342.4 362.0L348.0 359.0L352.5 354.7L347.0 357.6ZM365.7 373.5L369.7 371.0L373.1 367.8L369.1 370.3ZM358.8 373.9L368.4 371.9L377.7 368.4L368.0 370.4ZM351.2 384.5L355.4 382.2L358.7 378.8L354.5 381.1ZM352.9 365.6L356.8 364.0L359.8 361.0L355.9 362.6ZM358.7 387.3L365.5 386.1L371.8 383.4L365.0 384.6ZM346.3 383.0L351.0 381.7L355.5 379.7L350.8 381.0ZM339.9 376.6L343.8 375.3L346.9 372.5L343.0 373.9ZM361.1 377.0L369.0 371.4L376.1 364.8L368.2 370.4ZM328.4 370.8L337.4 367.3L345.9 362.6L336.9 366.1ZM354.0 368.7L362.5 363.7L370.2 357.7L361.8 362.7ZM334.4 377.9L339.0 375.2L342.8 371.6L338.2 374.2ZM353.5 378.8L359.9 376.5L366.0 373.4L359.6 375.7ZM360.1 361.8L366.2 359.3L371.6 355.5L365.5 358.0ZM357.7 367.7L365.7 364.8L373.1 360.7L365.1 363.6ZM351.8 364.7L360.6 359.3L368.9 353.1L360.1 358.5ZM343.7 383.4L351.5 381.4L358.8 377.9L351.0 379.9Z" fill="#365a8f"/><path d="M330.1 387.0L337.1 385.7L343.6 382.7L336.6 384.0ZM333.2 369.1L339.5 364.5L345.2 359.2L338.9 363.8ZM329.9 394.0L335.4 390.6L340.2 386.5L334.8 389.9ZM364.2 394.7L367.8 394.4L370.8 392.5L367.2 392.8ZM348.9 394.1L355.3 391.5L361.2 387.6L354.7 390.2ZM323.1 382.9L328.1 380.1L332.7 376.7L327.7 379.5ZM366.1 392.5L370.2 391.1L373.5 388.4L369.4 389.8ZM329.1 380.6L336.6 375.7L343.3 369.7L335.8 374.6ZM336.4 364.9L344.4 362.5L351.7 358.6L343.7 361.0ZM323.9 376.9L330.7 373.1L337.0 368.5L330.2 372.3ZM354.5 398.4L357.9 397.5L361.0 395.8L357.6 396.7ZM325.4 388.5L331.4 386.3L336.9 382.9L330.9 385.1ZM339.1 386.0L347.3 383.1L354.9 378.9L346.7 381.7ZM364.5 391.3L370.7 387.3L375.9 382.0L369.7 386.0ZM341.1 398.2L348.6 393.6L355.4 388.0L347.9 392.6ZM358.6 371.1L363.5 368.6L367.7 365.2L362.8 367.6ZM323.2 377.7L330.4 376.6L337.0 373.7L329.9 374.9ZM358.8 393.6L366.3 392.0L373.6 389.3L366.0 391.0ZM334.8 377.5L339.0 375.2L342.2 371.4L337.9 373.8ZM367.4 374.0L375.0 371.9L382.0 368.3L374.4 370.4ZM361.5 384.2L368.2 379.7L374.4 374.3L367.6 378.8ZM350.9 376.7L359.1 373.1L366.8 368.6L358.6 372.3ZM345.9 388.0L353.9 384.5L361.5 380.0L353.4 383.5ZM370.5 386.7L374.5 386.1L378.2 384.4L374.2 385.1ZM336.7 397.4L341.0 394.8L344.3 391.1L340.0 393.7ZM341.6 388.5L349.0 386.2L355.7 382.4L348.3 384.8ZM332.7 373.0L338.7 368.7L344.1 363.6L338.1 367.9ZM353.5 384.5L360.0 382.3L366.0 378.8L359.4 381.0ZM338.6 362.8L341.8 361.0L344.2 358.3L341.1 360.1ZM347.0 398.8L352.0 397.5L356.3 394.8L351.3 396.1ZM335.9 376.7L341.7 375.1L346.9 372.0L341.1 373.7ZM337.2 396.4L343.8 391.7L349.8 386.1L343.2 390.9ZM366.5 392.2L371.3 390.5L375.8 388.1L371.0 389.8ZM327.1 387.5L333.7 384.8L340.0 381.2L333.3 383.9ZM372.0 376.1L378.3 373.8L384.2 370.6L377.9 372.9ZM373.1 374.2L377.3 373.3L381.0 370.9L376.7 371.8ZM334.9 374.6L338.8 373.1L342.2 370.7L338.3 372.2ZM361.3 373.4L368.2 369.8L374.7 365.4L367.7 369.0ZM330.7 369.6L335.8 367.4L340.2 363.9L335.1 366.1ZM344.9 397.3L351.0 393.4L356.1 388.3L350.0 392.1ZM342.1 366.3L348.9 363.0L355.2 359.0L348.5 362.2ZM327.5 380.0L331.7 377.7L335.2 374.4L331.0 376.7ZM338.2 378.8L344.6 377.2L350.8 374.8L344.4 376.4ZM329.5 391.5L337.4 388.6L344.5 384.0L336.6 387.0ZM372.3 381.5L376.4 379.7L379.6 376.5L375.5 378.3ZM332.7 398.6L339.5 395.3L346.0 391.3L339.1 394.6ZM343.6 374.9L349.8 371.2L355.4 366.6L349.1 370.2ZM345.5 369.8L351.4 365.7L356.5 360.6L350.6 364.7ZM320.3 379.3L326.5 377.3L332.3 374.4L326.1 376.3ZM348.0 384.0L352.3 382.9L355.9 380.4L351.6 381.5Z" fill="#ffffff"/><path d="M328.5 353.0L328.1 356.2L328.7 359.4L329.0 356.2ZM324.9 376.5L325.6 379.8L327.0 382.9L326.3 379.6ZM322.9 340.9L323.8 346.4L325.9 351.5L325.0 346.0ZM329.1 355.2L328.6 357.8L329.7 360.2L330.2 357.6ZM321.3 354.8L321.7 361.1L323.4 367.2L322.9 360.9ZM320.4 370.4L321.6 376.9L324.0 382.9L322.7 376.5ZM322.0 352.9L322.9 358.0L324.4 362.9L323.6 357.8ZM323.6 344.6L323.1 347.2L323.9 349.6L324.4 347.1ZM321.8 354.7L322.2 360.0L323.4 365.3L323.0 359.9ZM322.4 342.2L322.0 345.3L322.4 348.4L322.8 345.3ZM325.1 362.9L324.7 365.6L325.3 368.3L325.7 365.6ZM320.9 361.7L320.9 365.9L322.5 369.8L322.4 365.6ZM326.6 374.3L325.8 377.9L326.7 381.4L327.4 377.8ZM324.0 339.4L323.7 342.3L324.2 345.2L324.4 342.3Z" fill="#365a8f"/><path d="M405.2 345.9L409.1 354.6L413.8 363.0L409.9 354.3ZM416.8 375.7L421.1 382.7L426.1 389.2L421.8 382.2ZM395.6 346.4L400.4 352.6L406.0 357.9L401.2 351.8ZM432.2 365.1L439.7 368.8L447.6 372.0L440.0 368.2ZM400.6 352.8L406.6 358.5L413.1 363.8L407.0 358.1ZM425.6 366.0L431.7 371.6L438.6 376.4L432.4 370.8ZM389.9 357.3L395.1 364.1L401.1 370.2L395.9 363.4ZM426.1 345.6L434.1 351.9L442.4 357.7L434.5 351.4ZM412.7 383.3L415.0 388.3L418.2 392.8L415.9 387.8ZM410.1 369.3L412.7 373.4L415.9 377.0L413.3 373.0ZM401.1 351.9L405.6 353.7L410.4 354.7L405.9 352.9ZM408.8 336.9L415.7 344.2L423.2 350.9L416.4 343.5ZM408.7 372.1L412.5 375.6L416.9 378.3L413.1 374.9ZM399.0 350.5L402.5 358.7L407.1 366.4L403.6 358.2ZM420.6 363.9L426.8 371.9L433.6 379.6L427.4 371.5ZM425.1 350.7L433.1 355.5L441.5 359.4L433.5 354.6ZM417.3 347.9L424.3 350.4L431.6 351.9L424.6 349.4ZM403.7 342.2L408.5 344.0L413.6 344.8L408.8 343.0ZM406.5 371.8L408.0 375.7L410.0 379.3L408.5 375.4ZM397.9 352.8L402.2 357.1L407.0 360.7L402.7 356.5ZM414.6 351.5L418.8 353.2L423.3 354.3L419.0 352.6ZM395.9 366.9L399.1 371.6L403.2 375.5L400.0 370.8ZM427.4 353.8L431.1 357.6L435.5 360.4L431.8 356.6ZM415.2 339.3L422.9 342.9L430.8 345.8L423.2 342.2ZM425.6 344.0L430.6 351.6L436.1 358.9L431.1 351.3ZM418.5 342.5L423.9 349.9L430.1 356.6L424.7 349.2Z" fill="#070b1c"/><path d="M355.6 388 L368 380 L382 378 L394.8 380 L392 388 L380 392 L368 398.4 L358 396Z" fill="#070b1c" filter="url(#r3)"/><path d="M411.3 378 L420 373.6 L430 380 L436 392 L432 402.5 L422 398 L414 390Z" fill="#070b1c" filter="url(#r3)"/><path d="M385 402 L394 400 L403 405 L400 412 L390 413Z" fill="#070b1c" filter="url(#r1)"/><path d="M338 392 L346 396 L352 390 L360 398 L350 402 L340 400Z" fill="#070b1c" filter="url(#r1)"/><path d="M310.6 402.9 L318 400 L323.4 410 L320 428.6 L314 424 L312 412Z" fill="#ffffff" filter="url(#r1)"/><path d="M326 392 L340 396 L358 402 L380 410 L376 420 L368 426 L390 432 L388 446 L372 455 L356 448 L346 434 L336 418 L330 404Z" fill="#ffffff" filter="url(#r2)"/><path d="M346.7 415.4L348.1 419.9L350.5 424.1L349.0 419.5ZM343.0 435.8L346.2 439.7L350.2 442.8L347.0 438.9ZM347.3 428.2L349.5 433.1L352.5 437.7L350.3 432.7ZM370.1 420.9L372.6 425.3L376.4 428.8L373.9 424.3ZM365.2 449.3L367.1 452.6L370.2 454.9L368.3 451.5ZM346.4 418.1L349.4 422.9L353.7 426.5L350.7 421.7ZM373.4 424.1L376.4 428.7L380.0 432.7L377.1 428.1ZM364.1 416.5L367.1 419.9L370.8 422.6L367.8 419.2ZM356.9 420.7L359.6 424.4L363.3 427.1L360.6 423.4ZM352.4 439.7L354.7 444.9L357.8 449.6L355.6 444.4ZM338.7 428.5L339.8 431.9L342.3 434.5L341.2 431.1ZM345.3 424.1L347.4 429.2L350.8 433.3L348.8 428.3ZM354.2 427.8L354.8 434.0L357.0 440.0L356.3 433.7ZM340.7 430.9L341.8 434.4L343.7 437.5L342.6 434.0ZM341.9 431.3L343.0 434.8L345.0 438.0L343.9 434.4ZM373.0 444.4L374.0 447.2L376.1 449.2L375.1 446.5ZM338.6 424.7L339.1 427.7L340.6 430.4L340.0 427.4ZM361.4 447.0L363.0 449.9L365.8 451.7L364.2 448.7ZM355.8 427.1L357.6 430.2L360.7 432.0L359.0 428.8ZM340.7 420.7L342.0 426.7L345.0 432.1L343.7 426.1ZM359.0 451.0L360.0 454.6L362.2 457.5L361.3 454.0ZM370.5 443.0L372.1 446.0L375.1 447.7L373.5 444.7ZM351.1 422.6L353.2 426.5L356.7 429.3L354.7 425.3ZM342.5 447.6L343.8 450.7L346.4 452.7L345.1 449.7ZM350.9 418.7L353.3 424.0L357.3 428.3L354.8 423.0ZM364.1 411.8L364.9 416.7L367.4 421.1L366.6 416.1ZM383.0 423.5L384.1 429.2L386.2 434.6L385.1 428.9ZM352.9 427.7L354.9 431.3L357.6 434.2L355.7 430.7ZM345.6 448.2L347.6 452.9L351.1 456.6L349.1 451.9ZM373.5 420.2L373.8 426.0L376.1 431.3L375.7 425.6ZM372.3 442.8L372.7 446.4L374.5 449.5L374.2 446.0ZM352.8 446.3L355.6 450.0L359.3 452.9L356.5 449.2ZM376.4 424.2L377.2 430.1L379.7 435.5L378.9 429.6ZM373.1 440.6L373.4 443.4L375.3 445.5L375.0 442.7ZM361.0 429.7L363.7 434.7L367.7 438.8L365.1 433.7ZM378.4 421.7L380.1 424.8L382.6 427.4L380.9 424.3ZM374.8 423.2L376.3 425.7L378.9 427.0L377.4 424.5ZM343.7 429.7L346.1 435.0L350.1 439.2L347.7 434.0ZM351.4 437.0L351.6 441.5L353.6 445.5L353.4 441.1ZM372.4 423.8L373.2 428.6L374.9 433.1L374.1 428.3Z" fill="#365a8f"/><path d="M403.2 428.6 L423.8 418.3 L439.2 405.4 L450 402.9 L470 402 L470 459.5 L450 459.5 L434 467.2 L413.5 477.5 L392.9 485.2 L374.9 477.5 L362 467.2 L367.2 456.9 L392.9 449.2Z" fill="#070b1c" filter="url(#r3)"/><path d="M420.8 463.2L428.3 460.2L434.9 455.8L427.5 458.7ZM448.3 456.2L454.7 452.9L460.1 448.3L453.8 451.6ZM452.3 460.1L461.6 454.1L470.3 447.2L461.0 453.2ZM421.2 445.1L428.4 442.6L435.1 439.0L427.9 441.5ZM415.6 461.8L422.4 459.7L428.7 456.4L421.9 458.5ZM433.0 464.3L442.7 459.3L451.1 452.3L441.3 457.2ZM403.8 444.3L414.3 440.4L424.3 435.2L413.7 439.1ZM396.8 439.8L402.5 438.3L407.5 435.2L401.8 436.6ZM410.7 459.0L420.8 453.4L429.3 445.9L419.3 451.4ZM416.4 464.2L426.0 458.8L434.6 451.8L425.0 457.2ZM433.8 466.9L443.7 461.8L452.9 455.5L443.0 460.6ZM366.8 448.9L377.5 446.3L387.4 441.3L376.7 444.0ZM416.0 466.5L421.4 464.9L425.9 461.5L420.5 463.1ZM441.6 444.4L447.6 442.3L453.0 438.9L447.0 441.0ZM408.3 448.1L413.1 446.1L417.4 443.1L412.6 445.1ZM399.9 457.0L405.9 455.2L411.3 452.1L405.3 453.9ZM411.6 435.5L421.8 431.3L431.4 425.9L421.2 430.1ZM418.8 458.5L428.1 455.7L436.6 451.0L427.3 453.7ZM394.9 461.5L399.9 461.0L404.1 458.3L399.1 458.7ZM406.6 432.9L415.4 427.6L423.1 420.7L414.2 426.0ZM377.2 448.2L388.1 443.9L398.4 438.3L387.5 442.5ZM439.3 437.0L444.5 434.5L448.7 430.6L443.5 433.1ZM425.6 439.8L431.0 436.8L435.6 432.9L430.3 435.8ZM387.2 439.6L392.8 437.7L397.5 434.2L392.0 436.1ZM404.6 471.2L415.0 466.6L424.5 460.5L414.2 465.0ZM388.1 452.3L393.2 449.5L397.5 445.8L392.5 448.6ZM405.2 442.0L411.8 439.5L417.4 435.1L410.8 437.7ZM402.2 432.8L410.5 430.2L418.3 426.7L410.1 429.2ZM443.7 459.7L452.1 456.1L459.2 450.4L450.8 454.0ZM404.0 446.5L411.7 442.9L418.3 437.5L410.6 441.2ZM378.6 442.7L388.4 440.0L397.6 435.4L387.7 438.2ZM428.0 440.7L436.2 438.7L443.9 435.2L435.7 437.2ZM381.8 431.6L391.6 428.6L401.1 424.6L391.2 427.6ZM397.8 447.5L404.6 445.1L410.4 440.8L403.5 443.1ZM397.9 449.4L406.8 447.2L415.1 443.4L406.2 445.6ZM395.8 444.5L405.3 440.7L414.1 435.6L404.6 439.4ZM398.8 445.7L408.8 440.9L417.9 434.4L407.9 439.3ZM394.6 439.7L400.2 438.6L405.1 435.5L399.4 436.7ZM383.1 436.9L388.9 433.9L393.3 429.2L387.6 432.2ZM431.8 465.8L440.2 464.2L447.8 460.3L439.4 461.9ZM404.2 435.7L414.4 432.2L423.9 427.3L413.7 430.7ZM438.3 450.8L443.0 449.8L447.3 447.8L442.6 448.7ZM434.1 454.0L439.1 451.3L443.3 447.4L438.4 450.2ZM423.1 454.9L430.2 453.8L436.6 450.3L429.4 451.4ZM408.9 443.6L414.8 441.2L419.3 436.8L413.4 439.2ZM385.0 434.9L391.4 431.8L396.5 426.9L390.1 430.0ZM376.0 448.3L380.7 447.1L384.6 444.4L380.0 445.5ZM436.7 453.6L446.7 449.2L455.7 443.1L445.7 447.5ZM395.2 443.9L405.7 441.6L415.4 436.9L404.9 439.3ZM419.5 433.4L426.1 430.1L431.5 425.2L424.9 428.4ZM437.7 451.9L446.3 446.3L453.8 439.4L445.2 445.0ZM428.4 451.0L435.7 449.2L442.1 445.1L434.7 446.9ZM424.8 440.2L431.0 437.9L435.9 433.7L429.8 435.9ZM435.5 462.0L446.7 458.6L457.1 453.4L445.9 456.7ZM396.2 461.1L404.0 456.9L411.1 451.5L403.3 455.8ZM442.8 450.5L452.5 445.0L461.6 438.5L451.9 444.0ZM378.5 461.4L388.8 457.3L398.3 451.6L388.0 455.6ZM405.3 470.0L413.8 464.6L421.6 458.1L413.1 463.6ZM392.7 430.7L400.3 429.0L407.1 425.3L399.5 427.0ZM393.4 457.3L398.5 455.9L402.8 452.9L397.7 454.3ZM434.1 435.2L440.3 433.2L445.9 429.7L439.6 431.7ZM419.3 461.6L426.9 459.6L433.6 455.6L426.0 457.5ZM406.4 467.4L411.6 465.7L415.8 462.2L410.6 463.9ZM378.8 459.9L388.6 453.6L397.3 445.9L387.5 452.2ZM435.1 431.8L441.9 429.4L448.2 425.7L441.3 428.1ZM407.8 430.7L418.2 427.4L428.2 422.9L417.8 426.3ZM407.9 447.5L417.1 444.4L425.7 439.7L416.5 442.9ZM382.5 462.2L387.8 459.6L392.0 455.4L386.8 458.1ZM397.8 432.8L405.6 431.2L412.7 427.6L404.9 429.2ZM388.3 469.3L398.1 464.0L406.7 457.1L397.0 462.3ZM424.6 449.2L432.0 447.0L439.0 443.7L431.6 445.9ZM429.8 460.1L437.0 456.7L442.9 451.5L435.8 454.8ZM382.8 456.4L389.7 453.7L396.1 449.7L389.1 452.5ZM381.7 446.7L387.7 444.4L393.0 440.7L387.0 443.0ZM419.8 459.0L425.4 457.6L429.9 454.0L424.3 455.5ZM402.9 467.0L408.4 466.1L413.3 463.5L407.8 464.3ZM456.0 443.0L462.3 440.4L468.0 436.9L461.8 439.4ZM385.8 433.3L393.9 429.3L401.0 423.6L392.9 427.7ZM450.6 459.0L460.9 454.0L470.1 447.4L459.8 452.3ZM417.4 463.9L424.3 461.8L430.3 458.0L423.5 460.1ZM420.1 434.6L425.3 433.1L429.5 429.6L424.3 431.0ZM424.2 457.0L435.6 454.1L446.2 449.2L434.9 452.1ZM373.0 443.9L379.7 442.7L385.8 439.6L379.1 440.9ZM367.6 444.3L376.2 442.4L384.0 438.3L375.4 440.2ZM382.1 466.2L391.6 460.2L400.2 453.0L390.7 459.0ZM444.5 451.7L454.7 446.4L464.0 439.7L453.8 445.0ZM427.0 430.2L438.0 426.5L448.5 421.7L437.5 425.4ZM436.3 439.0L442.7 435.7L448.0 430.8L441.6 434.1ZM426.0 433.5L434.1 430.8L441.6 426.7L433.5 429.4ZM451.4 437.5L456.4 434.8L460.6 431.0L455.6 433.7ZM421.3 462.9L428.5 459.0L434.6 453.6L427.4 457.5ZM421.3 443.3L425.7 441.7L429.5 439.1L425.2 440.6ZM407.3 435.8L413.5 434.5L418.8 431.0L412.6 432.4ZM390.3 430.5L397.1 427.8L403.1 423.6L396.4 426.4ZM434.3 437.2L444.2 433.6L453.4 428.4L443.5 432.0ZM415.1 466.2L420.5 464.2L425.5 461.1L420.0 463.1ZM375.0 443.0L382.9 438.3L389.8 432.2L381.9 436.9ZM396.9 447.6L403.0 446.2L408.7 443.5L402.6 444.9ZM393.5 440.5L402.8 438.1L411.5 434.0L402.2 436.5ZM428.9 432.0L433.7 430.7L437.8 427.8L432.9 429.1ZM396.3 431.3L405.5 428.3L414.1 423.7L404.8 426.7ZM382.1 457.0L390.4 453.0L398.2 447.9L389.8 451.9ZM390.8 443.4L395.6 441.4L399.3 437.7L394.5 439.7ZM392.8 456.6L399.5 453.4L405.1 448.4L398.4 451.6ZM407.0 434.9L414.5 430.9L420.5 424.8L413.0 428.8ZM412.5 449.7L420.7 445.2L427.9 439.3L419.7 443.7ZM438.0 439.3L448.1 436.7L457.6 432.4L447.5 435.0ZM380.0 449.8L388.3 445.1L395.4 438.8L387.1 443.4ZM419.3 471.8L427.7 466.8L434.7 460.1L426.4 465.1ZM378.2 442.4L385.8 438.0L392.1 431.9L384.5 436.3Z" fill="#365a8f"/><path d="M371.7 479.3L377.7 476.8L383.1 473.3L377.1 475.8ZM406.1 472.6L409.4 471.3L411.7 468.7L408.4 470.0ZM397.1 478.8L403.7 475.7L409.3 471.2L402.8 474.3ZM363.0 470.5L365.9 469.8L368.6 468.3L365.6 469.0ZM373.3 481.4L377.9 481.1L382.1 479.1L377.4 479.3ZM392.3 483.1L399.6 480.7L406.3 477.0L399.0 479.3ZM402.7 476.3L407.7 474.0L412.1 470.6L407.0 472.9ZM371.6 471.7L377.1 469.7L382.2 466.8L376.6 468.7ZM369.3 474.2L374.2 472.8L378.4 470.0L373.5 471.3ZM363.4 476.0L369.7 473.4L375.1 469.4L368.9 472.0ZM392.6 476.1L399.4 473.0L405.5 468.7L398.7 471.8ZM373.1 470.3L379.2 468.2L384.5 464.5L378.4 466.6ZM379.7 479.7L384.4 477.6L388.6 474.4L383.8 476.6ZM369.2 471.1L375.5 469.4L381.5 466.7L375.1 468.4ZM365.9 480.6L372.0 479.0L377.5 475.9L371.4 477.5ZM390.7 469.6L394.9 467.4L398.6 464.4L394.4 466.6ZM401.0 475.4L408.4 473.4L415.2 469.7L407.8 471.7ZM365.7 472.1L371.9 469.1L377.2 464.7L371.0 467.7ZM379.7 471.8L384.8 469.8L389.0 466.5L384.0 468.4ZM399.4 472.7L403.8 471.5L407.4 468.6L403.0 469.8ZM362.7 468.1L369.6 465.3L375.6 460.8L368.7 463.7ZM371.7 481.2L376.7 480.2L381.4 478.2L376.4 479.2ZM392.5 473.2L399.0 469.8L404.8 465.3L398.3 468.7ZM377.2 475.6L380.2 474.6L382.6 472.6L379.6 473.5ZM373.1 480.7L379.0 478.4L384.1 474.8L378.2 477.1ZM390.3 476.4L394.2 475.2L397.2 472.5L393.3 473.7ZM400.2 468.4L405.7 466.7L410.8 463.9L405.2 465.6ZM356.4 470.4L362.1 468.8L367.3 465.9L361.6 467.5ZM361.7 468.1L366.4 466.2L370.5 463.3L365.8 465.1ZM398.4 468.3L403.0 466.8L407.2 464.5L402.7 466.0Z" fill="#365a8f"/><path d="M313 445.3 L318 444 L324 459.5 L338 477.5 L346 492.9 L340 492 L330 478 L316 460Z" fill="#ffffff" filter="url(#r1)"/><path d="M310.6 499.3 L341.4 510.9 L362 526.3 L359.5 530.2 L336.3 518.6 L313.2 505.8Z" fill="#ffffff" filter="url(#r1)"/><path d="M421.2 474.9 L450 464.6 L470 462 L470 534 L450 534 L441.8 528.9 L444.3 510.9 L423.8 513.5 L418.6 498 L405.8 503.2 L398 516 L403.2 528.9 L390.3 541.8 L377.5 534 L369.7 518.6 L380 513.5 L392.9 500.6 L408.3 492.9Z" fill="#ffffff" filter="url(#r2)"/><path d="M349 500 L358 498 L367 506 L364 518.6 L354 516Z" fill="#070b1c" filter="url(#r2)"/><path d="M320 432 L330 436 L340 452 L350 470 L344 474 L332 458 L322 444Z" fill="#070b1c" filter="url(#r3)"/><path d="M330 482 L344 478 L360 484 L372 494 L362 498 L346 492 L334 490Z" fill="#070b1c" filter="url(#r3)"/><path d="M442.7 525.0L445.4 518.8L446.9 512.2L444.3 518.4ZM420.0 489.1L424.6 484.1L428.0 478.2L423.4 483.2ZM429.9 495.7L432.8 493.6L434.9 490.8L432.1 492.9ZM439.8 498.4L443.0 496.9L445.4 494.4L442.3 496.0ZM421.2 499.7L424.0 496.3L425.7 492.2L422.8 495.6ZM429.5 534.2L431.4 529.0L432.1 523.6L430.2 528.8ZM421.7 528.6L424.1 521.8L425.5 514.7L423.1 521.5ZM419.4 510.5L422.1 507.1L424.2 503.2L421.4 506.7ZM451.6 498.2L453.4 492.3L453.9 486.1L452.2 492.0ZM418.0 492.8L421.8 490.1L424.8 486.6L421.0 489.3ZM451.2 495.1L453.5 491.9L454.4 488.2L452.2 491.4ZM436.5 500.5L438.9 497.1L440.0 493.1L437.6 496.5ZM425.2 525.9L428.2 520.1L430.5 513.9L427.5 519.8ZM436.5 515.1L439.5 510.8L441.7 506.0L438.7 510.3ZM410.9 512.0L414.2 509.1L416.4 505.5L413.1 508.3ZM410.5 512.1L412.3 506.9L413.1 501.5L411.3 506.7ZM429.6 483.2L432.9 478.2L435.4 472.8L432.2 477.8ZM417.2 515.8L421.1 511.1L423.6 505.7L419.8 510.3ZM430.4 489.5L434.1 483.6L436.8 477.1L433.0 483.0ZM439.1 498.6L443.3 492.2L446.2 485.0L442.0 491.5ZM435.8 479.0L438.3 476.9L439.5 473.8L437.0 475.9ZM416.7 527.5L419.0 520.9L420.0 514.0L417.8 520.6ZM423.5 524.1L427.6 520.3L430.5 515.5L426.4 519.3ZM414.0 526.8L415.6 524.1L416.3 521.0L414.7 523.7ZM435.2 481.5L436.7 477.4L437.2 473.0L435.7 477.1ZM424.6 524.8L427.7 518.0L429.4 510.7L426.3 517.5ZM440.4 491.0L442.2 483.8L442.8 476.3L441.0 483.6ZM434.3 527.9L436.2 521.8L437.0 515.5L435.0 521.6ZM442.4 504.7L444.8 497.5L446.2 490.0L443.8 497.2ZM440.3 525.9L442.8 520.0L444.1 513.8L441.7 519.7ZM412.4 485.9L416.6 483.5L420.0 480.1L415.8 482.6ZM425.6 476.4L430.6 472.1L434.5 466.8L429.5 471.1ZM420.4 488.6L423.5 482.8L425.3 476.6L422.2 482.3ZM423.7 508.7L425.9 501.6L426.9 494.3L424.7 501.3ZM428.7 523.5L430.9 517.4L432.0 511.0L429.8 517.1ZM416.5 512.3L419.4 508.4L421.1 503.9L418.2 507.8ZM415.3 503.0L416.4 496.3L416.5 489.4L415.4 496.2ZM443.1 508.0L446.9 503.4L450.0 498.2L446.2 502.9ZM438.8 492.0L444.3 488.0L448.9 483.0L443.4 487.0ZM441.0 502.1L446.1 496.5L450.5 490.3L445.4 495.9Z" fill="#365a8f"/><path d="M321.8 513.7L324.8 516.0L328.2 517.5L325.3 515.2ZM359.6 513.3L363.1 515.1L367.1 515.5L363.5 513.7ZM325.1 516.1L329.2 519.3L333.9 521.4L329.8 518.2ZM342.1 519.7L348.3 522.4L354.9 524.1L348.7 521.4ZM351.2 503.1L356.0 506.9L361.5 509.7L356.7 505.9ZM338.9 494.6L343.7 498.6L349.1 502.0L344.3 497.9ZM340.7 529.9L347.3 532.5L354.4 533.4L347.7 530.8ZM319.0 506.4L324.1 508.1L329.4 508.9L324.3 507.1ZM328.9 515.2L334.7 518.8L341.2 520.9L335.3 517.4ZM321.2 505.4L325.6 506.6L330.2 507.0L325.8 505.7ZM352.3 531.0L354.5 534.3L357.4 537.1L355.2 533.8ZM354.5 512.0L357.4 516.0L361.2 519.2L358.3 515.2ZM339.7 513.9L345.2 517.8L351.5 520.1L346.0 516.3ZM337.3 500.7L343.5 504.4L350.3 507.1L344.1 503.4ZM348.0 520.2L352.8 523.4L358.1 525.7L353.3 522.5ZM343.2 537.1L347.7 539.1L352.5 539.3L348.1 537.4ZM347.6 523.0L351.0 526.9L355.2 530.2L351.7 526.3ZM331.9 528.1L334.6 531.2L338.1 533.1L335.5 530.1ZM347.8 526.9L352.7 528.4L357.9 528.9L352.9 527.3ZM343.9 510.2L349.7 512.4L355.9 513.5L350.0 511.3ZM353.7 506.7L359.3 510.7L365.4 513.9L359.8 509.9ZM354.4 496.1L356.0 498.9L358.7 500.7L357.1 497.9ZM333.6 501.6L338.2 504.5L343.3 506.3L338.7 503.4ZM319.0 518.3L325.9 521.7L333.2 524.0L326.3 520.6ZM338.8 503.0L341.2 506.9L344.8 509.8L342.3 505.9ZM358.3 511.9L361.3 515.0L364.9 517.5L361.9 514.3ZM319.3 514.6L321.7 517.9L324.9 520.3L322.5 517.0ZM352.9 507.3L358.0 509.4L363.4 510.3L358.3 508.2ZM329.1 521.6L331.6 523.6L334.7 524.5L332.2 522.5ZM360.4 506.6L365.5 510.5L371.1 513.7L366.0 509.8ZM330.4 529.9L335.0 531.2L339.8 531.7L335.2 530.3ZM339.8 494.7L343.5 496.2L347.6 496.9L343.8 495.4ZM342.2 498.4L345.5 502.2L349.5 505.2L346.2 501.5ZM325.6 535.6L332.0 537.4L338.5 538.3L332.1 536.5ZM361.3 511.4L367.0 515.8L373.2 519.4L367.5 515.0ZM317.8 526.1L322.9 530.1L328.6 533.2L323.5 529.2ZM341.0 502.3L344.5 504.9L348.7 506.3L345.2 503.7ZM332.2 506.8L334.5 509.4L337.7 510.7L335.4 508.1ZM339.5 505.1L344.6 507.1L350.1 507.8L345.0 505.8ZM349.5 510.4L355.7 514.2L362.5 516.9L356.2 513.2Z" fill="#ffffff"/><path d="M382.4 533.9L385.8 533.3L388.5 531.2L385.1 531.8ZM406.4 533.7L409.2 533.1L411.4 531.1L408.5 531.7ZM377.5 511.7L380.8 510.9L383.5 509.0L380.3 509.8ZM410.1 504.9L413.0 504.4L415.5 502.7L412.6 503.3ZM407.0 530.1L409.6 528.0L410.9 524.9L408.3 527.0ZM389.2 520.1L393.9 517.6L397.7 513.9L393.0 516.4ZM404.9 518.1L409.2 516.5L413.1 514.1L408.8 515.7ZM393.9 537.3L398.4 534.1L401.9 529.8L397.5 533.0ZM418.5 511.9L422.9 511.2L427.0 509.5L422.6 510.2ZM386.4 533.3L392.3 532.6L397.8 530.6L392.0 531.3ZM377.2 507.7L380.5 506.7L383.2 504.7L380.0 505.8ZM409.3 509.8L413.2 509.7L416.7 508.1L412.9 508.2ZM386.1 512.2L388.5 511.2L390.2 509.2L387.8 510.2ZM418.1 520.2L422.1 515.3L425.3 509.8L421.3 514.7ZM371.9 530.4L376.2 528.8L380.0 526.4L375.8 528.0ZM408.3 534.0L412.9 533.1L417.1 530.8L412.4 531.7ZM376.2 524.3L379.6 521.9L382.3 518.9L379.0 521.3ZM407.7 524.3L412.7 523.5L417.3 521.5L412.3 522.3ZM400.1 513.6L404.1 513.4L407.9 512.4L403.9 512.6ZM385.0 529.0L390.1 528.9L395.0 527.5L389.9 527.6ZM393.1 519.6L396.8 518.9L400.3 517.4L396.6 518.1ZM403.3 535.9L407.7 532.9L411.0 528.8L406.6 531.8ZM393.1 514.2L399.7 513.9L406.0 512.5L399.5 512.8ZM413.2 529.9L417.9 525.6L422.0 520.6L417.3 525.0ZM372.0 521.7L375.0 518.4L377.2 514.5L374.1 517.8ZM421.8 517.8L427.4 517.2L432.7 515.3L427.1 515.9ZM380.7 514.3L384.6 512.8L387.8 510.1L383.9 511.6ZM394.4 515.6L400.5 513.3L406.2 510.2L400.1 512.5ZM389.4 535.6L395.6 534.2L401.3 531.3L395.1 532.7ZM402.8 526.5L405.5 523.5L407.5 519.9L404.8 522.9Z" fill="#070b1c"/><path d="M315.7 540 L326 534 L340 538 L352 546 L356.9 556 L350 565 L338 560 L326 552Z" fill="#ffffff" filter="url(#r3)"/><path d="M354.3 544 L362 536.6 L376 538 L388 546 L392.9 556 L384 562 L377 570 L366 566 L358 556Z" fill="#070b1c" filter="url(#r1)"/><path d="M359.5 549 L366 547 L372.3 550 L368 553.3 L361 553Z" fill="#ffffff"/><path d="M400.6 539.2 L420 546 L450 557.2 L470 562 L470 570 L450 567.5 L418.6 557.2 L392.9 554.6Z" fill="#070b1c" filter="url(#r1)"/><path d="M336.1 538.1L339.0 540.9L342.6 542.8L339.7 540.0ZM327.3 537.4L331.1 541.7L335.8 545.1L332.0 540.8ZM316.7 547.5L320.6 552.7L325.6 556.8L321.7 551.7ZM337.0 540.8L340.4 545.6L344.9 549.4L341.5 544.6ZM322.8 549.8L325.5 552.3L329.1 553.6L326.3 551.1ZM334.2 542.6L338.8 546.8L344.2 550.0L339.6 545.8ZM348.2 549.5L349.4 551.8L351.6 553.5L350.3 551.1ZM333.6 551.2L336.4 555.4L340.2 558.8L337.3 554.6ZM335.1 546.6L339.6 551.0L344.6 554.9L340.1 550.5ZM323.3 556.2L328.4 558.6L333.8 560.4L328.7 557.9ZM336.8 554.8L340.1 557.0L343.9 558.4L340.5 556.2ZM339.4 548.3L342.0 551.1L345.4 553.0L342.8 550.1ZM330.6 544.6L335.4 547.9L340.5 550.4L335.8 547.1ZM335.4 554.1L336.7 556.4L338.8 557.9L337.5 555.7ZM329.4 557.1L334.5 560.1L340.1 562.1L335.0 559.1ZM333.2 558.0L336.6 559.8L340.3 560.8L336.9 559.0ZM318.2 542.5L321.5 546.0L325.5 548.8L322.1 545.4ZM340.6 547.8L345.5 550.8L351.1 552.5L346.2 549.5ZM340.6 542.0L345.9 544.8L351.8 546.1L346.4 543.3ZM316.8 552.4L320.0 556.4L324.2 559.3L321.0 555.3ZM323.8 550.2L327.9 554.5L332.8 557.9L328.7 553.6ZM324.5 542.7L326.5 545.2L329.4 546.3L327.4 543.9ZM345.1 540.9L348.7 544.6L352.9 547.7L349.3 544.0ZM342.5 554.4L344.8 556.3L347.5 557.3L345.3 555.4ZM342.5 547.1L344.5 549.6L347.0 551.5L345.1 549.0ZM327.0 557.2L329.3 559.0L332.1 559.5L329.9 557.7ZM317.1 552.4L320.0 554.3L323.5 555.0L320.5 553.1ZM346.3 546.6L348.2 548.4L350.6 549.5L348.7 547.6ZM321.5 552.6L325.3 556.8L329.9 560.1L326.1 555.9ZM339.0 539.9L341.9 542.2L345.3 543.7L342.4 541.4Z" fill="#365a8f"/><path d="M338.6 520.0L341.7 522.1L345.3 522.8L342.2 520.8ZM331.3 526.8L336.6 530.1L342.5 532.1L337.2 528.7ZM325.0 529.5L327.2 532.3L330.0 534.5L327.8 531.7ZM307.8 528.0L309.8 530.5L312.5 532.1L310.5 529.7ZM349.2 526.9L354.2 530.1L359.8 531.9L354.8 528.8ZM319.4 515.5L323.4 519.3L328.3 521.9L324.2 518.1ZM334.9 522.4L337.7 524.7L341.1 526.1L338.3 523.8ZM324.1 537.9L328.0 542.7L332.7 546.8L328.8 542.0ZM348.1 531.3L350.5 534.8L354.0 537.1L351.6 533.7ZM343.5 523.9L345.5 526.7L348.4 528.5L346.4 525.7ZM323.0 525.6L328.2 528.0L333.8 529.1L328.6 526.7ZM311.8 524.1L315.7 526.9L320.4 528.4L316.4 525.6ZM349.6 532.8L352.1 534.3L354.9 535.2L352.4 533.7ZM325.3 529.5L330.7 532.9L336.6 535.5L331.2 532.0ZM316.6 525.7L322.4 528.1L328.5 529.4L322.7 527.0ZM328.6 526.5L332.0 528.3L335.7 529.1L332.3 527.3ZM324.5 542.6L327.1 544.7L330.1 546.2L327.5 544.1ZM308.4 521.4L312.7 525.7L317.5 529.4L313.2 525.0ZM340.1 525.8L343.8 528.5L348.0 530.7L344.2 528.0ZM305.1 532.6L307.9 535.6L311.5 537.5L308.8 534.4ZM341.4 523.0L345.9 524.7L350.6 525.1L346.1 523.5ZM325.5 512.8L329.1 516.4L333.2 519.2L329.6 515.7ZM324.2 521.0L327.1 522.6L330.4 523.0L327.5 521.3ZM322.4 534.1L327.4 537.0L332.9 538.8L327.9 535.9Z" fill="#070b1c"/><path d="M290.5 517 L291.9 530.5 L301.4 544 L317.6 554.9 L339 563 L358 571 L369 575 L377 572.4 L379 566 L372 570 L360 568 L340 560 L319 551.5 L304 541.5 L295 529.5 L294 518Z" fill="#070b1c"/><path d="M298 512 L306 508 L312 512 L306 520 L300 522Z" fill="#070b1c" filter="url(#r1)"/><path d="M515 636 L517 639.5 L530 643.5 L545 645 L560 644.5 L575 641.5 L577 636Z" fill="#070b1c"/></g></svg>
<div class="abs" style="left:598px;top:91px;width:15px;height:666px;background:#4a4a4a;border-left:1px solid #404040"></div>
<svg class="abs" style="left:602px;top:98px;" width="8" height="5" viewBox="0 0 8 5"><path d="M1 4l3-3 3 3" stroke="#c8c8c8" stroke-width="1.100" fill="none"/></svg>
<svg class="abs" style="left:602px;top:746px;" width="8" height="5" viewBox="0 0 8 5"><path d="M1 1l3 3 3-3" stroke="#c8c8c8" stroke-width="1.100" fill="none"/></svg>
<div class="abs" style="left:42px;top:757px;width:571px;height:16px;background:#4a4a4a;border-top:1px solid #404040"></div>
<div class="abs" style="left:42px;top:758px;width:44px;height:14px;background:#3d3d3d;"></div>
<svg class="tx" style="left:46px;top:756.5px" width="38" height="18"><text x="0" y="13.3" font-size="12" font-weight="normal" fill="#f0f0f0" textLength="36" lengthAdjust="spacingAndGlyphs">51.22%</text></svg>
<svg class="tx" style="left:102px;top:757.0px" width="123" height="17"><text x="0" y="12.5" font-size="11" font-weight="normal" fill="#dcdcdc" textLength="121" lengthAdjust="spacingAndGlyphs">2300 px x 2450 px (300 ppi)</text></svg>
<svg class="abs" style="left:243px;top:762px;" width="6" height="8" viewBox="0 0 6 8"><path d="M1.500 1l3 3-3 3" stroke="#d0d0d0" stroke-width="1.100" fill="none"/></svg>
<svg class="abs" style="left:260px;top:762px;" width="6" height="8" viewBox="0 0 6 8"><path d="M4.500 1l-3 3 3 3" stroke="#d0d0d0" stroke-width="1.100" fill="none"/></svg>
<div class="abs" style="left:367px;top:759px;width:118px;height:12px;background:#6a6a6a;"></div>
<svg class="abs" style="left:586px;top:762px;" width="6" height="8" viewBox="0 0 6 8"><path d="M1.500 1l3 3-3 3" stroke="#d0d0d0" stroke-width="1.100" fill="none"/></svg>
<div class="abs" style="left:598px;top:757px;width:15px;height:16px;background:#4a4a4a;"></div>
<div class="abs" style="left:0px;top:773px;width:880px;height:4px;background:#565656;"></div>
<div class="abs" style="left:0px;top:776px;width:880px;height:1px;background:#6a6a6a;"></div>
<div class="abs" style="left:613px;top:65px;width:3px;height:708px;background:#3a3a3a;"></div>
<div class="abs" style="left:616px;top:65px;width:260px;height:11px;background:#3e3e3e;"></div>
<svg class="abs" style="left:863px;top:66px;" width="9" height="7" viewBox="0 0 9 7"><path d="M1 1l2.300 2.500L1 6M4.400 1l2.300 2.500L4.400 6" stroke="#d8d8d8" stroke-width="1" fill="none"/></svg>
<div class="abs" style="left:616px;top:76px;width:260px;height:697px;background:#4f4f4f;"></div>
<div class="abs" style="left:616px;top:76px;width:260px;height:25px;background:#424242;"></div>
<div class="abs" style="left:616px;top:76px;width:51px;height:25px;background:#535353;"></div>
<svg class="tx" style="left:623px;top:79.0px" width="39" height="18"><text x="0" y="13.3" font-size="12" font-weight="bold" fill="#f2f2f2" textLength="37" lengthAdjust="spacingAndGlyphs">プロパティ</text></svg>
<svg class="abs" style="left:861px;top:84px;" width="10" height="8" viewBox="0 0 10 8"><path d="M0 1h10M0 3h10M0 5h10M0 7h10" stroke="#b0b0b0" stroke-width="1"/></svg>
<div class="abs" style="left:616px;top:101px;width:260px;height:4px;background:#3a3a3a;"></div>
<div class="abs" style="left:616px;top:105px;width:260px;height:25px;background:#424242;"></div>
<div class="abs" style="left:616px;top:105px;width:45px;height:25px;background:#535353;"></div>
<div class="abs" style="left:661px;top:105px;width:1px;height:25px;background:#383838;"></div>
<div class="abs" style="left:714px;top:105px;width:1px;height:25px;background:#383838;"></div>
<div class="abs" style="left:745px;top:105px;width:1px;height:25px;background:#383838;"></div>
<svg class="tx" style="left:624px;top:108.5px" width="31" height="18"><text x="0" y="13.3" font-size="12" font-weight="bold" fill="#f4f4f4" textLength="29" lengthAdjust="spacingAndGlyphs">レイヤー</text></svg>
<svg class="tx" style="left:669px;top:108.5px" width="40" height="18"><text x="0" y="13.3" font-size="12" font-weight="normal" fill="#c8c8c8" textLength="38" lengthAdjust="spacingAndGlyphs">チャンネル</text></svg>
<svg class="tx" style="left:723px;top:108.5px" width="18" height="18"><text x="0" y="13.3" font-size="12" font-weight="normal" fill="#c8c8c8" textLength="16" lengthAdjust="spacingAndGlyphs">パス</text></svg>
<svg class="abs" style="left:861px;top:113.5px;" width="10" height="8" viewBox="0 0 10 8"><path d="M0 1h10M0 3h10M0 5h10M0 7h10" stroke="#b0b0b0" stroke-width="1"/></svg>
<div class="abs" style="left:616px;top:130px;width:260px;height:642px;background:#535353;"></div>
<div class="abs" style="left:620px;top:140px;width:106px;height:16px;background:#494949;border-radius:2px"></div>
<svg class="abs" style="left:626px;top:143px;" width="11" height="11" viewBox="0 0 11 11"><circle cx="4.300" cy="4.300" r="3.300" fill="none" stroke="#c6c6c6" stroke-width="1.300"/><path d="M6.800 6.800l3.300 3.300" stroke="#c6c6c6" stroke-width="1.500"/></svg>
<svg class="tx" style="left:640px;top:139.5px" width="23" height="18"><text x="0" y="13.3" font-size="12" font-weight="normal" fill="#8e8e8e" textLength="21" lengthAdjust="spacingAndGlyphs">種類</text></svg>
<svg class="abs" style="left:718px;top:147px;" width="7" height="5" viewBox="0 0 7 5"><path d="M1 1l2.500 2.500L6 1" stroke="#6e6e6e" stroke-width="1.100" fill="none"/></svg>
<svg class="abs" style="left:745px;top:143px;" width="13" height="11" viewBox="0 0 13 11"><rect x=".600" y=".600" width="11.800" height="9.800" fill="none" stroke="#b4b4b4" stroke-width="1.200"/><path d="M2 8.500l2.800-3.300 2 2.200 1.500-1.400L11 8.500z" fill="#b4b4b4"/></svg>
<svg class="abs" style="left:768px;top:143px;" width="12" height="12" viewBox="0 0 12 12"><circle cx="6" cy="6" r="5" fill="none" stroke="#b4b4b4" stroke-width="1.200"/><path d="M9.500 2.500A5 5 0 0 1 2.500 9.500z" fill="#b4b4b4"/></svg>
<svg class="abs" style="left:789px;top:143px;" width="12" height="12" viewBox="0 0 12 12"><path d="M1 .800h10v3h-1l-.400-1.600H7v7.600l1.500.400v1H3.500v-1L5 9.800V2.200H2.400L2 3.800H1z" fill="#b4b4b4"/></svg>
<svg class="abs" style="left:811px;top:143px;" width="13" height="12" viewBox="0 0 13 12"><rect x="2" y="2" width="9" height="8" fill="none" stroke="#b4b4b4" stroke-width="1.200"/><rect x="0" y="0" width="3.500" height="3.500" fill="#b4b4b4"/><rect x="9.500" y="0" width="3.500" height="3.500" fill="#b4b4b4"/><rect x="0" y="8.500" width="3.500" height="3.500" fill="#b4b4b4"/><rect x="9.500" y="8.500" width="3.500" height="3.500" fill="#b4b4b4"/></svg>
<svg class="abs" style="left:834px;top:142px;" width="12" height="13" viewBox="0 0 12 13"><path d="M3 .800h5l3 3v8.400H3z" fill="none" stroke="#b4b4b4" stroke-width="1.200"/><rect x="0" y="5.500" width="7" height="7" fill="#b4b4b4"/></svg>
<div class="abs" style="left:863px;top:139px;width:9px;height:16px;background:#484848;border-radius:4.500px"></div>
<div class="abs" style="left:863.5px;top:139px;width:8px;height:8px;background:#b4b4b4;border-radius:4px"></div>
<div class="abs" style="left:616px;top:160px;width:260px;height:1px;background:#474747;"></div>
<div class="abs" style="left:620px;top:165px;width:140px;height:19px;background:#505050;border:1px solid #5b5b5b;border-radius:2px"></div>
<svg class="tx" style="left:627px;top:166.0px" width="24" height="18"><text x="0" y="13.3" font-size="12" font-weight="normal" fill="#8a8a8a" textLength="22" lengthAdjust="spacingAndGlyphs">通常</text></svg>
<svg class="abs" style="left:750px;top:173px;" width="7" height="5" viewBox="0 0 7 5"><path d="M1 1l2.500 2.500L6 1" stroke="#707070" stroke-width="1.100" fill="none"/></svg>
<svg class="tx" style="left:768px;top:166.0px" width="53" height="18"><text x="0" y="13.3" font-size="12" font-weight="normal" fill="#8a8a8a" textLength="51" lengthAdjust="spacingAndGlyphs">不透明度 :</text></svg>
<div class="abs" style="left:823px;top:165px;width:36px;height:19px;background:#505050;border:1px solid #5b5b5b"></div>
<svg class="tx" style="left:826px;top:166.0px" width="29" height="18"><text x="0" y="13.3" font-size="12" font-weight="normal" fill="#757575" textLength="27" lengthAdjust="spacingAndGlyphs">100%</text></svg>
<div class="abs" style="left:860px;top:165px;width:12px;height:19px;background:#505050;border:1px solid #5b5b5b"></div>
<svg class="abs" style="left:862px;top:173px;" width="7" height="5" viewBox="0 0 7 5"><path d="M1 1l2.500 2.500L6 1" stroke="#707070" stroke-width="1.100" fill="none"/></svg>
<div class="abs" style="left:616px;top:750px;width:260px;height:1px;background:#464646;"></div>
<svg class="abs" style="left:690px;top:756px;" width="14" height="10" viewBox="0 0 14 10"><rect x=".700" y="2.200" width="7" height="5.600" rx="2.800" fill="none" stroke="#a9a9a9" stroke-width="1.300"/><rect x="6.300" y="2.200" width="7" height="5.600" rx="2.800" fill="none" stroke="#a9a9a9" stroke-width="1.300"/></svg>
<svg class="tx" style="left:716px;top:752.0px" width="13" height="18"><text x="0" y="13.3" font-size="12" font-weight="normal" fill="#a9a9a9" textLength="11" lengthAdjust="spacingAndGlyphs" font-style="italic">fx</text></svg>
<svg class="abs" style="left:739px;top:755px;" width="14" height="12" viewBox="0 0 14 12"><rect x=".500" y="1" width="13" height="10" rx="1" fill="#a9a9a9"/><circle cx="7" cy="6" r="3" fill="#535353"/></svg>
<svg class="abs" style="left:764px;top:755px;" width="13" height="13" viewBox="0 0 13 13"><circle cx="6.500" cy="6.500" r="5.300" fill="none" stroke="#a9a9a9" stroke-width="1.300"/><path d="M10.300 2.700A5.300 5.300 0 0 1 2.700 10.300z" fill="#a9a9a9"/></svg>
<svg class="abs" style="left:789px;top:755px;" width="13" height="12" viewBox="0 0 13 12"><path d="M.500 1.500h4.500l1.200 1.500H12.500v8.500H.500z" fill="#a9a9a9"/></svg>
<svg class="abs" style="left:814px;top:755px;" width="12" height="12" viewBox="0 0 12 12"><rect x=".700" y=".700" width="10.600" height="10.600" fill="none" stroke="#a9a9a9" stroke-width="1.200"/><path d="M6 3.300v5.400M3.300 6h5.400" stroke="#a9a9a9" stroke-width="1.300"/></svg>
<svg class="abs" style="left:839px;top:754px;" width="12" height="14" viewBox="0 0 12 14"><path d="M.500 3h11M4 3V1.200h4V3M1.800 3l.600 10h7.200l.600-10" fill="none" stroke="#a9a9a9" stroke-width="1.200"/><path d="M4.500 5.500v5.500M7.500 5.500v5.500" stroke="#a9a9a9" stroke-width="1"/></svg>
<div class="abs" style="left:875px;top:65px;width:1px;height:708px;background:#3e3e3e;"></div>
<div class="abs" style="left:876px;top:31px;width:4px;height:746px;background:#5a5a5a;"></div>
<div class="abs" style="left:616px;top:772px;width:260px;height:1px;background:#3e3e3e;"></div>
<div class="abs" style="left:449px;top:183px;width:421px;height:458px;border-radius:8px;background:#535353;box-shadow:0 18px 42px rgba(0,0,0,.36),0 6px 16px rgba(0,0,0,.26),0 0 0 1px rgba(60,60,60,.5)"></div>
<div class="abs" style="left:449px;top:183px;width:421px;height:25px;border-radius:8px 8px 0 0;background:#eff2f6"></div>
<svg class="tx" style="left:455px;top:186.5px" width="79" height="18"><text x="0" y="13.3" font-size="12" font-weight="normal" fill="#111111" textLength="77" lengthAdjust="spacingAndGlyphs">シャドウ・ハイライト</text></svg>
<svg class="abs" style="left:850px;top:190px;" width="11" height="11" viewBox="0 0 11 11"><path d="M.700 .700l9.600 9.600M10.300 .700L.700 10.300" stroke="#1a1a1a" stroke-width="1.200"/></svg>
<div class="abs" style="left:459px;top:224px;width:286px;height:99px;border:1px solid #474747;box-shadow:inset 0 0 0 1px #5d5d5d,0 0 0 0 #000"></div>
<div class="abs" style="left:475px;top:217px;width:44px;height:15px;background:#535353;"></div>
<svg class="tx" style="left:480px;top:215.0px" width="36" height="18"><text x="0" y="13.3" font-size="12" font-weight="normal" fill="#ececec" textLength="34" lengthAdjust="spacingAndGlyphs">シャドウ</text></svg>
<svg class="tx" style="left:469px;top:240.0px" width="23" height="18"><text x="0" y="13.3" font-size="12" font-weight="normal" fill="#e4e4e4" textLength="21" lengthAdjust="spacingAndGlyphs">量 :</text></svg>
<div class="abs" style="left:545px;top:245px;width:122px;height:2px;background:#7b7b7b;border-radius:1px"></div>
<svg class="abs" style="left:618.5px;top:247.5px;" width="12" height="11" viewBox="0 0 12 11"><path d="M6 .700L11 6.300V8.500a1.700 1.700 0 0 1-1.700 1.700H2.700A1.700 1.700 0 0 1 1 8.500V6.300z" fill="#ffffff" stroke="#1c1c1c" stroke-width="1.100" stroke-linejoin="round"/></svg>
<div class="abs" style="left:678px;top:238px;width:38px;height:21px;background:#454545;border:1px solid #666666"></div>
<svg class="tx" style="left:682.5px;top:239.5px" width="15" height="18"><text x="0" y="13.3" font-size="12" font-weight="normal" fill="#f4f4f4" textLength="13" lengthAdjust="spacingAndGlyphs">65</text></svg>
<svg class="tx" style="left:722px;top:240.0px" width="12" height="18"><text x="0" y="13.3" font-size="12" font-weight="normal" fill="#e4e4e4" textLength="10" lengthAdjust="spacingAndGlyphs">%</text></svg>
<svg class="tx" style="left:469px;top:268.0px" width="33" height="18"><text x="0" y="13.3" font-size="12" font-weight="normal" fill="#e4e4e4" textLength="31" lengthAdjust="spacingAndGlyphs">階調 :</text></svg>
<div class="abs" style="left:545px;top:273px;width:122px;height:2px;background:#7b7b7b;border-radius:1px"></div>
<svg class="abs" style="left:600px;top:275.5px;" width="12" height="11" viewBox="0 0 12 11"><path d="M6 .700L11 6.300V8.500a1.700 1.700 0 0 1-1.700 1.700H2.700A1.700 1.700 0 0 1 1 8.500V6.300z" fill="#ffffff" stroke="#1c1c1c" stroke-width="1.100" stroke-linejoin="round"/></svg>
<div class="abs" style="left:678px;top:266px;width:38px;height:21px;background:#454545;border:1px solid #666666"></div>
<svg class="tx" style="left:682.5px;top:267.5px" width="15" height="18"><text x="0" y="13.3" font-size="12" font-weight="normal" fill="#f4f4f4" textLength="13" lengthAdjust="spacingAndGlyphs">50</text></svg>
<svg class="tx" style="left:722px;top:268.0px" width="12" height="18"><text x="0" y="13.3" font-size="12" font-weight="normal" fill="#e4e4e4" textLength="10" lengthAdjust="spacingAndGlyphs">%</text></svg>
<svg class="tx" style="left:469px;top:296.0px" width="33" height="18"><text x="0" y="13.3" font-size="12" font-weight="normal" fill="#e4e4e4" textLength="31" lengthAdjust="spacingAndGlyphs">半径 :</text></svg>
<div class="abs" style="left:545px;top:301px;width:122px;height:2px;background:#7b7b7b;border-radius:1px"></div>
<svg class="abs" style="left:556px;top:303.5px;" width="12" height="11" viewBox="0 0 12 11"><path d="M6 .700L11 6.300V8.500a1.700 1.700 0 0 1-1.700 1.700H2.700A1.700 1.700 0 0 1 1 8.500V6.300z" fill="#ffffff" stroke="#1c1c1c" stroke-width="1.100" stroke-linejoin="round"/></svg>
<div class="abs" style="left:678px;top:294px;width:38px;height:21px;background:#454545;border:1px solid #666666"></div>
<svg class="tx" style="left:682.5px;top:295.5px" width="15" height="18"><text x="0" y="13.3" font-size="12" font-weight="normal" fill="#f4f4f4" textLength="13" lengthAdjust="spacingAndGlyphs">30</text></svg>
<svg class="tx" style="left:722px;top:296.0px" width="14" height="18"><text x="0" y="13.3" font-size="12" font-weight="normal" fill="#e4e4e4" textLength="12" lengthAdjust="spacingAndGlyphs">px</text></svg>
<div class="abs" style="left:459px;top:339px;width:286px;height:98px;border:1px solid #474747;box-shadow:inset 0 0 0 1px #5d5d5d,0 0 0 0 #000"></div>
<div class="abs" style="left:475px;top:332px;width:53px;height:15px;background:#535353;"></div>
<svg class="tx" style="left:480px;top:330.0px" width="45" height="18"><text x="0" y="13.3" font-size="12" font-weight="normal" fill="#ececec" textLength="43" lengthAdjust="spacingAndGlyphs">ハイライト</text></svg>
<svg class="tx" style="left:469px;top:353.0px" width="23" height="18"><text x="0" y="13.3" font-size="12" font-weight="normal" fill="#e4e4e4" textLength="21" lengthAdjust="spacingAndGlyphs">量 :</text></svg>
<div class="abs" style="left:545px;top:358px;width:122px;height:2px;background:#7b7b7b;border-radius:1px"></div>
<svg class="abs" style="left:569px;top:360.5px;" width="12" height="11" viewBox="0 0 12 11"><path d="M6 .700L11 6.300V8.500a1.700 1.700 0 0 1-1.700 1.700H2.700A1.700 1.700 0 0 1 1 8.500V6.300z" fill="#ffffff" stroke="#1c1c1c" stroke-width="1.100" stroke-linejoin="round"/></svg>
<div class="abs" style="left:678px;top:351px;width:38px;height:21px;background:#454545;border:1px solid #2f6fc2;box-shadow:0 0 0 1px #284a78"></div>
<svg class="tx" style="left:682.5px;top:352.5px" width="15" height="18"><text x="0" y="13.3" font-size="12" font-weight="normal" fill="#f4f4f4" textLength="13" lengthAdjust="spacingAndGlyphs">25</text></svg>
<svg class="tx" style="left:722px;top:353.0px" width="12" height="18"><text x="0" y="13.3" font-size="12" font-weight="normal" fill="#e4e4e4" textLength="10" lengthAdjust="spacingAndGlyphs">%</text></svg>
<svg class="tx" style="left:469px;top:381.5px" width="33" height="18"><text x="0" y="13.3" font-size="12" font-weight="normal" fill="#e4e4e4" textLength="31" lengthAdjust="spacingAndGlyphs">階調 :</text></svg>
<div class="abs" style="left:545px;top:386.5px;width:122px;height:2px;background:#7b7b7b;border-radius:1px"></div>
<svg class="abs" style="left:600px;top:389.0px;" width="12" height="11" viewBox="0 0 12 11"><path d="M6 .700L11 6.300V8.500a1.700 1.700 0 0 1-1.700 1.700H2.700A1.700 1.700 0 0 1 1 8.500V6.300z" fill="#ffffff" stroke="#1c1c1c" stroke-width="1.100" stroke-linejoin="round"/></svg>
<div class="abs" style="left:678px;top:379.5px;width:38px;height:21px;background:#454545;border:1px solid #666666"></div>
<svg class="tx" style="left:682.5px;top:381.0px" width="15" height="18"><text x="0" y="13.3" font-size="12" font-weight="normal" fill="#f4f4f4" textLength="13" lengthAdjust="spacingAndGlyphs">50</text></svg>
<svg class="tx" style="left:722px;top:381.5px" width="12" height="18"><text x="0" y="13.3" font-size="12" font-weight="normal" fill="#e4e4e4" textLength="10" lengthAdjust="spacingAndGlyphs">%</text></svg>
<svg class="tx" style="left:469px;top:410.0px" width="33" height="18"><text x="0" y="13.3" font-size="12" font-weight="normal" fill="#e4e4e4" textLength="31" lengthAdjust="spacingAndGlyphs">半径 :</text></svg>
<div class="abs" style="left:545px;top:415px;width:122px;height:2px;background:#7b7b7b;border-radius:1px"></div>
<svg class="abs" style="left:556px;top:417.5px;" width="12" height="11" viewBox="0 0 12 11"><path d="M6 .700L11 6.300V8.500a1.700 1.700 0 0 1-1.700 1.700H2.700A1.700 1.700 0 0 1 1 8.500V6.300z" fill="#ffffff" stroke="#1c1c1c" stroke-width="1.100" stroke-linejoin="round"/></svg>
<div class="abs" style="left:678px;top:408px;width:38px;height:21px;background:#454545;border:1px solid #666666"></div>
<svg class="tx" style="left:682.5px;top:409.5px" width="15" height="18"><text x="0" y="13.3" font-size="12" font-weight="normal" fill="#f4f4f4" textLength="13" lengthAdjust="spacingAndGlyphs">30</text></svg>
<svg class="tx" style="left:722px;top:410.0px" width="14" height="18"><text x="0" y="13.3" font-size="12" font-weight="normal" fill="#e4e4e4" textLength="12" lengthAdjust="spacingAndGlyphs">px</text></svg>
<div class="abs" style="left:459px;top:453px;width:286px;height:123px;border:1px solid #474747;box-shadow:inset 0 0 0 1px #5d5d5d,0 0 0 0 #000"></div>
<div class="abs" style="left:475px;top:446px;width:32px;height:15px;background:#535353;"></div>
<svg class="tx" style="left:480px;top:444.0px" width="24" height="18"><text x="0" y="13.3" font-size="12" font-weight="normal" fill="#ececec" textLength="22" lengthAdjust="spacingAndGlyphs">調整</text></svg>
<svg class="tx" style="left:469px;top:468.0px" width="36" height="18"><text x="0" y="13.3" font-size="12" font-weight="normal" fill="#e4e4e4" textLength="34" lengthAdjust="spacingAndGlyphs">カラー :</text></svg>
<div class="abs" style="left:545px;top:473px;width:122px;height:2px;background:#7b7b7b;border-radius:1px"></div>
<svg class="abs" style="left:611.5px;top:475.5px;" width="12" height="11" viewBox="0 0 12 11"><path d="M6 .700L11 6.300V8.500a1.700 1.700 0 0 1-1.700 1.700H2.700A1.700 1.700 0 0 1 1 8.500V6.300z" fill="#ffffff" stroke="#1c1c1c" stroke-width="1.100" stroke-linejoin="round"/></svg>
<div class="abs" style="left:678px;top:466px;width:38px;height:21px;background:#454545;border:1px solid #666666"></div>
<svg class="tx" style="left:682.5px;top:467.5px" width="22" height="18"><text x="0" y="13.3" font-size="12" font-weight="normal" fill="#f4f4f4" textLength="20" lengthAdjust="spacingAndGlyphs">+20</text></svg>
<svg class="tx" style="left:469px;top:496.0px" width="44" height="18"><text x="0" y="13.3" font-size="12" font-weight="normal" fill="#e4e4e4" textLength="42" lengthAdjust="spacingAndGlyphs">中間調 :</text></svg>
<div class="abs" style="left:545px;top:501px;width:122px;height:2px;background:#7b7b7b;border-radius:1px"></div>
<svg class="abs" style="left:600px;top:503.5px;" width="12" height="11" viewBox="0 0 12 11"><path d="M6 .700L11 6.300V8.500a1.700 1.700 0 0 1-1.700 1.700H2.700A1.700 1.700 0 0 1 1 8.500V6.300z" fill="#ffffff" stroke="#1c1c1c" stroke-width="1.100" stroke-linejoin="round"/></svg>
<div class="abs" style="left:678px;top:494px;width:38px;height:21px;background:#454545;border:1px solid #666666"></div>
<svg class="tx" style="left:682.5px;top:495.5px" width="9" height="18"><text x="0" y="13.3" font-size="12" font-weight="normal" fill="#f4f4f4" textLength="7" lengthAdjust="spacingAndGlyphs">0</text></svg>
<svg class="tx" style="left:469px;top:524.5px" width="93" height="18"><text x="0" y="13.3" font-size="12" font-weight="normal" fill="#e4e4e4" textLength="91" lengthAdjust="spacingAndGlyphs">シャドウのクリップ :</text></svg>
<div class="abs" style="left:678px;top:522.5px;width:38px;height:21px;background:#454545;border:1px solid #666666"></div>
<svg class="tx" style="left:682.5px;top:524.0px" width="24" height="18"><text x="0" y="13.3" font-size="12" font-weight="normal" fill="#f4f4f4" textLength="22" lengthAdjust="spacingAndGlyphs">0.01</text></svg>
<svg class="tx" style="left:722px;top:524.5px" width="12" height="18"><text x="0" y="13.3" font-size="12" font-weight="normal" fill="#e4e4e4" textLength="10" lengthAdjust="spacingAndGlyphs">%</text></svg>
<svg class="tx" style="left:469px;top:549.0px" width="102" height="18"><text x="0" y="13.3" font-size="12" font-weight="normal" fill="#e4e4e4" textLength="100" lengthAdjust="spacingAndGlyphs">ハイライトのクリップ :</text></svg>
<div class="abs" style="left:678px;top:547px;width:38px;height:21px;background:#454545;border:1px solid #666666"></div>
<svg class="tx" style="left:682.5px;top:548.5px" width="24" height="18"><text x="0" y="13.3" font-size="12" font-weight="normal" fill="#f4f4f4" textLength="22" lengthAdjust="spacingAndGlyphs">0.01</text></svg>
<svg class="tx" style="left:722px;top:549.0px" width="12" height="18"><text x="0" y="13.3" font-size="12" font-weight="normal" fill="#e4e4e4" textLength="10" lengthAdjust="spacingAndGlyphs">%</text></svg>
<div class="abs" style="left:759px;top:224px;width:102px;height:23px;background:#535353;border:1.500px solid #dedede;border-radius:11.500px"></div>
<svg class="tx" style="left:802.0px;top:226.5px" width="18" height="18"><text x="0" y="13.3" font-size="12" font-weight="normal" fill="#f4f4f4" textLength="16" lengthAdjust="spacingAndGlyphs">OK</text></svg>
<div class="abs" style="left:759px;top:255px;width:102px;height:23px;background:#535353;border:1px solid #8a8a8a;border-radius:11.500px"></div>
<svg class="tx" style="left:788.0px;top:257.5px" width="46" height="18"><text x="0" y="13.3" font-size="12" font-weight="normal" fill="#f4f4f4" textLength="44" lengthAdjust="spacingAndGlyphs">キャンセル</text></svg>
<div class="abs" style="left:759px;top:286px;width:102px;height:23px;background:#535353;border:1px solid #8a8a8a;border-radius:11.500px"></div>
<svg class="tx" style="left:774.0px;top:288.5px" width="74" height="18"><text x="0" y="13.3" font-size="12" font-weight="normal" fill="#f4f4f4" textLength="72" lengthAdjust="spacingAndGlyphs">読み込み(L)...</text></svg>
<div class="abs" style="left:759px;top:317px;width:102px;height:23px;background:#535353;border:1px solid #8a8a8a;border-radius:11.500px"></div>
<svg class="tx" style="left:785.0px;top:319.5px" width="52" height="18"><text x="0" y="13.3" font-size="12" font-weight="normal" fill="#f4f4f4" textLength="50" lengthAdjust="spacingAndGlyphs">保存(S)...</text></svg>
<svg class="abs" style="left:759px;top:352px;" width="11" height="11" viewBox="0 0 11 11"><rect width="11" height="11" rx="2" fill="#f0f0f0"/><path d="M2.300 5.600l2.300 2.400 4.200-5" fill="none" stroke="#1a1a1a" stroke-width="1.700"/></svg>
<svg class="tx" style="left:776px;top:348.5px" width="63" height="18"><text x="0" y="13.3" font-size="12" font-weight="normal" fill="#f0f0f0" textLength="61" lengthAdjust="spacingAndGlyphs">プレビュー(P)</text></svg>
<div class="abs" style="left:459px;top:586px;width:141px;height:21px;background:#4a4a4a;border:1px solid #6a6a6a;border-radius:2px"></div>
<svg class="tx" style="left:474px;top:587.5px" width="114" height="18"><text x="0" y="13.3" font-size="12" font-weight="normal" fill="#f4f4f4" textLength="112" lengthAdjust="spacingAndGlyphs">初期設定値を保存(V)</text></svg>
<svg class="abs" style="left:458px;top:618px;" width="11" height="11" viewBox="0 0 11 11"><rect width="11" height="11" rx="2" fill="#f0f0f0"/><path d="M2.300 5.600l2.300 2.400 4.200-5" fill="none" stroke="#1a1a1a" stroke-width="1.700"/></svg>
<svg class="tx" style="left:475px;top:614.5px" width="122" height="18"><text x="0" y="13.3" font-size="12" font-weight="normal" fill="#f0f0f0" textLength="120" lengthAdjust="spacingAndGlyphs">詳細オプションを表示(O)</text></svg>
</body></html>
